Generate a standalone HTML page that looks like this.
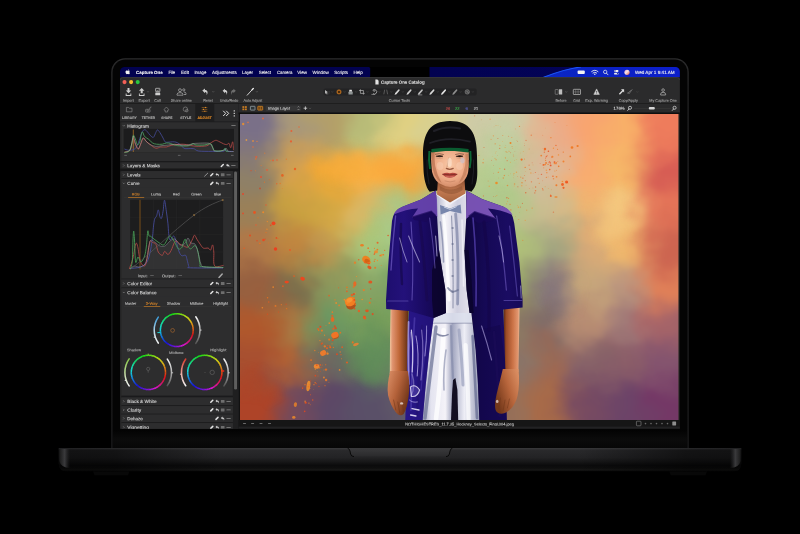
<!DOCTYPE html>
<html lang="en">
<head>
<meta charset="utf-8">
<title>Capture One on MacBook Pro</title>
<style>
html,body{margin:0;padding:0;background:#000;}
body{width:800px;height:534px;overflow:hidden;font-family:"Liberation Sans",sans-serif;}
.stage{position:relative;width:800px;height:534px;background:#000;overflow:hidden;will-change:transform;}
.stage svg{display:block;position:absolute;left:0;top:0;}
</style>
</head>
<body>
<div class="stage">
<svg width="800" height="534" viewBox="0 0 800 534" font-family="'Liberation Sans', sans-serif" text-rendering="geometricPrecision">
<defs>

<linearGradient id="lidEdge" x1="0" y1="0" x2="0" y2="1">
  <stop offset="0" stop-color="#2c2c2d"/><stop offset="0.08" stop-color="#202021"/><stop offset="1" stop-color="#1a1a1b"/>
</linearGradient>
<linearGradient id="chinGrad" x1="0" y1="0" x2="0" y2="1">
  <stop offset="0" stop-color="#030303"/><stop offset="0.5" stop-color="#0b0b0b"/><stop offset="1" stop-color="#070707"/>
</linearGradient>
<linearGradient id="baseGrad" x1="0" y1="0" x2="0" y2="1">
  <stop offset="0" stop-color="#2e2e30"/><stop offset="0.1" stop-color="#29292b"/><stop offset="0.4" stop-color="#232325"/>
  <stop offset="0.6" stop-color="#161617"/><stop offset="0.74" stop-color="#0b0b0c"/><stop offset="0.86" stop-color="#0e0e0e"/>
  <stop offset="0.94" stop-color="#181817"/><stop offset="1" stop-color="#040404"/>
</linearGradient>
<linearGradient id="baseEnds" x1="0" y1="0" x2="1" y2="0">
  <stop offset="0" stop-color="#000" stop-opacity="0.55"/><stop offset="0.08" stop-color="#000" stop-opacity="0.52"/><stop offset="0.24" stop-color="#000" stop-opacity="0"/>
  <stop offset="0.76" stop-color="#000" stop-opacity="0"/><stop offset="0.92" stop-color="#000" stop-opacity="0.52"/><stop offset="1" stop-color="#000" stop-opacity="0.55"/>
</linearGradient>
<linearGradient id="baseTopLine" x1="0" y1="0" x2="1" y2="0">
  <stop offset="0" stop-color="#232325"/><stop offset="0.25" stop-color="#3c3c3e"/><stop offset="0.75" stop-color="#3c3c3e"/><stop offset="1" stop-color="#232325"/>
</linearGradient>
<linearGradient id="sideL" x1="0" y1="0" x2="1" y2="0">
  <stop offset="0" stop-color="#1a1a1a"/><stop offset="0.5" stop-color="#3a3a3c"/><stop offset="1" stop-color="#262628" stop-opacity="0"/>
</linearGradient>
<linearGradient id="sideR" x1="1" y1="0" x2="0" y2="0">
  <stop offset="0" stop-color="#1a1a1a"/><stop offset="0.5" stop-color="#3a3a3c"/><stop offset="1" stop-color="#262628" stop-opacity="0"/>
</linearGradient>
<linearGradient id="notchGrad" x1="0" y1="0" x2="0" y2="1">
  <stop offset="0" stop-color="#3a3a3c"/><stop offset="1" stop-color="#2a2a2c"/>
</linearGradient>

<linearGradient id="mbRight" x1="0" y1="0" x2="1" y2="0">
  <stop offset="0" stop-color="#020250"/><stop offset="1" stop-color="#03035c"/>
</linearGradient>
<linearGradient id="mbSwoosh" x1="0" y1="0" x2="1" y2="0">
  <stop offset="0" stop-color="#0a27c4"/><stop offset="0.35" stop-color="#0b22c2"/><stop offset="1" stop-color="#0c1ecc"/>
</linearGradient>
<linearGradient id="siri" x1="0" y1="0" x2="1" y2="1">
  <stop offset="0" stop-color="#f0a0c0"/><stop offset="0.45" stop-color="#f4e4ec"/><stop offset="1" stop-color="#e0503c"/>
</linearGradient>

<linearGradient id="arcBlue" x1="0" y1="0" x2="0" y2="1"><stop offset="0" stop-color="#3a9ad8"/><stop offset="0.55" stop-color="#b8d8e8"/><stop offset="1" stop-color="#f2f2f2"/></linearGradient>
<linearGradient id="arcGreen" x1="0" y1="0" x2="0" y2="1"><stop offset="0" stop-color="#88c848"/><stop offset="0.55" stop-color="#c0d8a0"/><stop offset="1" stop-color="#f2f2f2"/></linearGradient>
<linearGradient id="arcRed" x1="0" y1="0" x2="0" y2="1"><stop offset="0" stop-color="#d83c2c"/><stop offset="0.55" stop-color="#e8a8a0"/><stop offset="1" stop-color="#f2f2f2"/></linearGradient>
<linearGradient id="arcGrey" x1="0" y1="0" x2="0" y2="1"><stop offset="0" stop-color="#f4f4f4"/><stop offset="0.5" stop-color="#b0b0b0"/><stop offset="1" stop-color="#555"/></linearGradient>

<clipPath id="photoClip"><rect x="240.0" y="114.0" width="438.4" height="306.0"/></clipPath>
<filter id="bgBlur" x="-10%" y="-10%" width="120%" height="120%" color-interpolation-filters="sRGB"><feGaussianBlur stdDeviation="10" result="b"/><feTurbulence type="fractalNoise" baseFrequency="0.022 0.026" numOctaves="3" seed="11" result="t"/><feDisplacementMap in="b" in2="t" scale="34" xChannelSelector="R" yChannelSelector="G" result="d"/><feGaussianBlur in="d" stdDeviation="1.2"/></filter>
<filter id="blobBlur" x="-20%" y="-20%" width="140%" height="140%" color-interpolation-filters="sRGB"><feGaussianBlur stdDeviation="7" result="b"/><feTurbulence type="fractalNoise" baseFrequency="0.03 0.034" numOctaves="3" seed="5" result="t"/><feDisplacementMap in="b" in2="t" scale="26" xChannelSelector="G" yChannelSelector="R" result="d"/><feGaussianBlur in="d" stdDeviation="1"/></filter>
<filter id="soft" x="-5%" y="-5%" width="110%" height="110%" color-interpolation-filters="sRGB"><feGaussianBlur stdDeviation="0.45"/></filter>
<linearGradient id="armL" x1="0" y1="0" x2="1" y2="0"><stop offset="0" stop-color="#f0c8a0"/><stop offset="0.14" stop-color="#e09470"/><stop offset="0.5" stop-color="#c06838"/><stop offset="0.85" stop-color="#7c3e1c"/><stop offset="1" stop-color="#5a2a12"/></linearGradient>
<linearGradient id="armR" x1="0" y1="0" x2="1" y2="0"><stop offset="0" stop-color="#4e220e"/><stop offset="0.2" stop-color="#9c4c26"/><stop offset="0.6" stop-color="#cc7448"/><stop offset="0.88" stop-color="#e0946c"/><stop offset="1" stop-color="#ecb894"/></linearGradient>
<linearGradient id="handL" x1="0" y1="0" x2="1" y2="0.6"><stop offset="0" stop-color="#dc9068"/><stop offset="0.5" stop-color="#b4623a"/><stop offset="1" stop-color="#6e3418"/></linearGradient>
<linearGradient id="handR" x1="1" y1="0" x2="0" y2="0.6"><stop offset="0" stop-color="#e09468"/><stop offset="0.5" stop-color="#b8663c"/><stop offset="1" stop-color="#74381a"/></linearGradient>
<linearGradient id="trouser" x1="0" y1="0" x2="1" y2="0"><stop offset="0" stop-color="#8c90ac"/><stop offset="0.18" stop-color="#e4e4f0"/><stop offset="0.42" stop-color="#f4f2f8"/><stop offset="0.54" stop-color="#a0a4be"/><stop offset="0.74" stop-color="#eeeef6"/><stop offset="1" stop-color="#9a9eb8"/></linearGradient>
<linearGradient id="shirt" x1="0" y1="0" x2="1" y2="0"><stop offset="0" stop-color="#b4b6cc"/><stop offset="0.3" stop-color="#f2f0f6"/><stop offset="0.62" stop-color="#d0d0e0"/><stop offset="1" stop-color="#e4e2ec"/></linearGradient>
<linearGradient id="neck" x1="0" y1="0" x2="0" y2="1"><stop offset="0" stop-color="#8c4c2c"/><stop offset="0.55" stop-color="#c07850"/><stop offset="1" stop-color="#a4623c"/></linearGradient>
<radialGradient id="face" cx="0.5" cy="0.42" r="0.7"><stop offset="0" stop-color="#f8c8a6"/><stop offset="0.55" stop-color="#eeaa86"/><stop offset="1" stop-color="#c47c58"/></radialGradient>
<linearGradient id="jacketL" x1="0" y1="0" x2="1" y2="0"><stop offset="0" stop-color="#1e0e6e"/><stop offset="0.3" stop-color="#23117a"/><stop offset="0.65" stop-color="#190a60"/><stop offset="1" stop-color="#100642"/></linearGradient>
<linearGradient id="jacketR" x1="0" y1="0" x2="1" y2="0"><stop offset="0" stop-color="#0f063e"/><stop offset="0.35" stop-color="#150955"/><stop offset="0.75" stop-color="#1a0c62"/><stop offset="1" stop-color="#170a58"/></linearGradient>
<clipPath id="screenClip"><path d="M120 428.8 V71.6 A4.6 4.6 0 0 1 124.6 67 H675.2 A4.6 4.6 0 0 1 679.8 71.6 V428.8 Z"/></clipPath>
</defs>
<rect id="bg" x="0" y="0" width="800" height="534" fill="#000"/>
<g id="laptop-lid">
<path d="M111.2 449 V72.2 A14 14 0 0 1 125.2 58.2 H674.8 A14 14 0 0 1 688.8 72.2 V449 Z" fill="url(#lidEdge)"/>
<path d="M112.6 449 V72.4 A12.8 12.8 0 0 1 125.4 59.6 H674.6 A12.8 12.8 0 0 1 687.4 72.4 V449 Z" fill="#040404"/>
<rect x="113" y="430" width="574" height="18" fill="url(#chinGrad)"/>
</g>
<g id="screen" clip-path="url(#screenClip)">
<rect x="120" y="67" width="560" height="362" fill="#000"/>
<g id="menubar">
<rect x="120" y="67" width="560" height="10.4" fill="#000"/>
<path d="M120 77.4 V67 H368.6 Q370.2 67 370.2 68.6 V75.8 Q370.2 77.4 368.6 77.4 Z" fill="#020250"/>
<rect x="429.5" y="67" width="250.5" height="10.4" fill="url(#mbRight)"/>
<path d="M543.4 77.4 C556 72.6 566 68.6 581 67 H680 V77.4 Z" fill="url(#mbSwoosh)"/>
<path d="M543.4 77.4 C556 72.6 566 68.6 581 67" fill="none" stroke="#1d55f5" stroke-width="1.1"/>
<g fill="#f2f2f2" transform="translate(128.1 71.8) scale(0.74) translate(-128.3 -72)"><path d="M128.3 70.5 c0.9 -0.5 1.9 -0.2 2.4 0.5 c-0.9 0.6 -1.1 1.8 0 2.5 c-0.3 0.9 -0.9 1.7 -1.6 1.7 c-0.5 0 -0.7 -0.3 -1.2 -0.3 c-0.5 0 -0.7 0.3 -1.2 0.3 c-0.9 0 -1.9 -1.6 -1.9 -3 c0 -1.5 1.2 -2.3 2.3 -1.9 c0.5 0.2 0.8 0.3 1.2 0.2 z"/><path d="M128.3 70.2 c0 -0.8 0.5 -1.4 1.3 -1.6 c0.1 0.8 -0.5 1.5 -1.3 1.6 z"/></g>
<text transform="matrix(1 0.0006 0.0006 1 136.1 73.91)" font-size="4.45" fill="#f4f4f4" textLength="26.6" lengthAdjust="spacingAndGlyphs" font-weight="700" stroke="#f4f4f4" stroke-width="0.1">Capture One</text>
<text transform="matrix(1 0.0006 0.0006 1 168.4 73.93)" font-size="4.5" fill="#eeeeee" textLength="6.8" lengthAdjust="spacingAndGlyphs" stroke="#eeeeee" stroke-width="0.1">File</text>
<text transform="matrix(1 0.0006 0.0006 1 181 73.93)" font-size="4.5" fill="#eeeeee" textLength="8" lengthAdjust="spacingAndGlyphs" stroke="#eeeeee" stroke-width="0.1">Edit</text>
<text transform="matrix(1 0.0006 0.0006 1 194.4 73.93)" font-size="4.5" fill="#eeeeee" textLength="11.9" lengthAdjust="spacingAndGlyphs" stroke="#eeeeee" stroke-width="0.1">Image</text>
<text transform="matrix(1 0.0006 0.0006 1 212 73.93)" font-size="4.5" fill="#eeeeee" textLength="24.8" lengthAdjust="spacingAndGlyphs" stroke="#eeeeee" stroke-width="0.1">Adjustments</text>
<text transform="matrix(1 0.0006 0.0006 1 241.9 73.93)" font-size="4.5" fill="#eeeeee" textLength="11.2" lengthAdjust="spacingAndGlyphs" stroke="#eeeeee" stroke-width="0.1">Layer</text>
<text transform="matrix(1 0.0006 0.0006 1 258.7 73.93)" font-size="4.5" fill="#eeeeee" textLength="12.2" lengthAdjust="spacingAndGlyphs" stroke="#eeeeee" stroke-width="0.1">Select</text>
<text transform="matrix(1 0.0006 0.0006 1 276.9 73.93)" font-size="4.5" fill="#eeeeee" textLength="15.5" lengthAdjust="spacingAndGlyphs" stroke="#eeeeee" stroke-width="0.1">Camera</text>
<text transform="matrix(1 0.0006 0.0006 1 297.3 73.93)" font-size="4.5" fill="#eeeeee" textLength="9.7" lengthAdjust="spacingAndGlyphs" stroke="#eeeeee" stroke-width="0.1">View</text>
<text transform="matrix(1 0.0006 0.0006 1 312.6 73.93)" font-size="4.5" fill="#eeeeee" textLength="16.3" lengthAdjust="spacingAndGlyphs" stroke="#eeeeee" stroke-width="0.1">Window</text>
<text transform="matrix(1 0.0006 0.0006 1 334.3 73.93)" font-size="4.5" fill="#eeeeee" textLength="13.8" lengthAdjust="spacingAndGlyphs" stroke="#eeeeee" stroke-width="0.1">Scripts</text>
<text transform="matrix(1 0.0006 0.0006 1 353.5 73.93)" font-size="4.5" fill="#eeeeee" textLength="9.4" lengthAdjust="spacingAndGlyphs" stroke="#eeeeee" stroke-width="0.1">Help</text>
<rect x="577.6" y="70.6" width="7.2" height="3.4" rx="0.9" fill="#f4f4f4"/>
<g fill="none" stroke="#f0f0f0" stroke-linecap="round"><path d="M591.6 71.6 Q594.8 68.8 598 71.6" stroke-width="0.9"/><path d="M592.9 73 Q594.8 71.3 596.7 73" stroke-width="0.9"/></g><circle cx="594.8" cy="74.3" r="0.75" fill="#f0f0f0"/>
<circle cx="605.2" cy="71.9" r="1.7" fill="none" stroke="#f0f0f0" stroke-width="0.75"/><path d="M606.5 73.2 L608 74.8" stroke="#f0f0f0" stroke-width="0.8" stroke-linecap="round"/>
<g fill="#f0f0f0"><rect x="614.1" y="70" width="4.4" height="1.9" rx="0.9"/><rect x="614.1" y="72.7" width="4.4" height="1.9" rx="0.9"/></g><circle cx="615.1" cy="70.95" r="0.6" fill="#10208c"/><circle cx="617.5" cy="73.65" r="0.6" fill="#10208c"/>
<circle cx="627" cy="72.3" r="2.6" fill="url(#siri)"/>
<text transform="matrix(1 0.0006 0.0006 1 634.9 73.93)" font-size="4.5" fill="#f2f2f2" textLength="39.8" lengthAdjust="spacingAndGlyphs" stroke="#f2f2f2" stroke-width="0.1">Wed Apr 1  9:41 AM</text>
</g>
<g id="app-window">
<rect x="120" y="77.3" width="560" height="352" fill="#1e1e1f"/>
<g id="toolbar">
<path d="M120 104 V80 Q120 77.3 122.7 77.3 H677.3 Q680 77.3 680 80 V104 Z" fill="#2b2b2c"/>
<path d="M120.2 80 Q120.2 77.6 122.7 77.6 H677.3 Q679.8 77.6 679.8 80" fill="none" stroke="#4a4a4c" stroke-width="0.5"/>
<circle cx="124.5" cy="82.1" r="2.05" fill="#f35f57"/>
<circle cx="131.1" cy="82.1" r="2.05" fill="#f6bd2e"/>
<circle cx="137.7" cy="82.1" r="2.05" fill="#2ac63f"/>
<path d="M375.4 79.6 h2 l1.2 1.2 v3.6 h-3.2 z" fill="#e4e4e4"/>
<text transform="matrix(1 0.0006 0.0006 1 381 83.66)" font-size="4.6" fill="#dcdcdc" textLength="43.6" lengthAdjust="spacingAndGlyphs" font-weight="700" stroke="#dcdcdc" stroke-width="0.1">Capture One Catalog</text>
<g fill="#cdcdcd">
<path d="M127.5 87.9 h2 v2.5 h1.7 l-2.7 2.9 l-2.7 -2.9 h1.7 z"/>
<path d="M125.7 93.4 h0.9 v1.6 h3.8 v-1.6 h0.9 v2.6 h-5.6 z"/>
<path d="M140.7 93.3 h2 v-2.5 h1.7 l-2.7 -2.9 l-2.7 2.9 h1.7 z"/>
<path d="M138.9 93.4 h0.9 v1.6 h3.8 v-1.6 h0.9 v2.6 h-5.6 z"/>
</g>
<path d="M147.25 91.4 l0.75 0.8 l0.75 -0.8" fill="none" stroke="#8a8a8a" stroke-width="0.45"/>
<rect x="155.6" y="88.3" width="4.3" height="3.3" rx="0.4" fill="none" stroke="#d0d0d0" stroke-width="0.7"/><rect x="155.3" y="92.6" width="4.9" height="2.6" rx="0.3" fill="#cfcfcf"/><path d="M156.8 90.2 l0.8 0.8 l1.3 -1.5" stroke="#d0d0d0" stroke-width="0.5" fill="none"/>
<g fill="none" stroke="#bdbdbd" stroke-width="0.65"><circle cx="180" cy="90.2" r="1.45"/><path d="M177 95.2 V94.4 Q177 92.6 180 92.6 Q183 92.6 183 94.4 V95.2 Z"/><circle cx="183.8" cy="89.9" r="1.1"/><path d="M183.9 92 Q186 92 186 93.6 V94.5 H184"/></g>
<path d="M202.3 90.6 L205 88.4 V89.9 C207.8 89.9 208.3 92.6 206.6 95.2 C207 93.1 206.4 92 205 92 V93.3 Z" fill="#cdcdcd"/>
<path d="M212.55 91.4 l0.75 0.8 l0.75 -0.8" fill="none" stroke="#8a8a8a" stroke-width="0.45"/>
<path d="M222.6 90.8 L225 88.8 V90.1 C227.4 90.1 227.9 92.6 226.5 95 C226.8 93.1 226.2 92.1 225 92.1 V93.2 Z" fill="#cdcdcd"/>
<path d="M235.8 90.8 L233.4 88.8 V90.1 C231 90.1 230.5 92.6 231.9 95 C231.6 93.1 232.2 92.1 233.4 92.1 V93.2 Z" fill="#6d6d6d"/>
<path d="M247.2 95.2 L253.2 88.6" stroke="#cfcfcf" stroke-width="1" stroke-linecap="round"/><path d="M252 89.9 L253.3 88.5" stroke="#f2f2f2" stroke-width="1.2" stroke-linecap="round"/>
<path d="M256.15 91.4 l0.75 0.8 l0.75 -0.8" fill="none" stroke="#8a8a8a" stroke-width="0.45"/>
<text transform="matrix(1 0.0006 0.0006 1 122.9 101.79)" font-size="3.8" fill="#a2a2a2" textLength="10.9" lengthAdjust="spacingAndGlyphs" stroke="#a2a2a2" stroke-width="0.1">Import</text>
<text transform="matrix(1 0.0006 0.0006 1 138.6 101.79)" font-size="3.8" fill="#a2a2a2" textLength="11.3" lengthAdjust="spacingAndGlyphs" stroke="#a2a2a2" stroke-width="0.1">Export</text>
<text transform="matrix(1 0.0006 0.0006 1 154.3 101.79)" font-size="3.8" fill="#a2a2a2" textLength="6.6" lengthAdjust="spacingAndGlyphs" stroke="#a2a2a2" stroke-width="0.1">Cull</text>
<text transform="matrix(1 0.0006 0.0006 1 170.8 101.79)" font-size="3.8" fill="#a2a2a2" textLength="21.1" lengthAdjust="spacingAndGlyphs" stroke="#a2a2a2" stroke-width="0.1">Share online</text>
<text transform="matrix(1 0.0006 0.0006 1 203.2 101.79)" font-size="3.8" fill="#a2a2a2" textLength="9.7" lengthAdjust="spacingAndGlyphs" stroke="#a2a2a2" stroke-width="0.1">Reset</text>
<text transform="matrix(1 0.0006 0.0006 1 219.8 101.79)" font-size="3.8" fill="#a2a2a2" textLength="18.6" lengthAdjust="spacingAndGlyphs" stroke="#a2a2a2" stroke-width="0.1">Undo/Redo</text>
<text transform="matrix(1 0.0006 0.0006 1 243.4 101.79)" font-size="3.8" fill="#a2a2a2" textLength="18.8" lengthAdjust="spacingAndGlyphs" stroke="#a2a2a2" stroke-width="0.1">Auto Adjust</text>
<text transform="matrix(1 0.0006 0.0006 1 388.8 101.79)" font-size="3.8" fill="#a2a2a2" textLength="21.2" lengthAdjust="spacingAndGlyphs" stroke="#a2a2a2" stroke-width="0.1">Cursor Tools</text>
<text transform="matrix(1 0.0006 0.0006 1 555.6 101.79)" font-size="3.8" fill="#a2a2a2" textLength="10.9" lengthAdjust="spacingAndGlyphs" stroke="#a2a2a2" stroke-width="0.1">Before</text>
<text transform="matrix(1 0.0006 0.0006 1 573.2 101.79)" font-size="3.8" fill="#a2a2a2" textLength="6.6" lengthAdjust="spacingAndGlyphs" stroke="#a2a2a2" stroke-width="0.1">Grid</text>
<text transform="matrix(1 0.0006 0.0006 1 585.3 101.79)" font-size="3.8" fill="#a2a2a2" textLength="22.6" lengthAdjust="spacingAndGlyphs" stroke="#a2a2a2" stroke-width="0.1">Exp. Warning</text>
<text transform="matrix(1 0.0006 0.0006 1 618.8 101.79)" font-size="3.8" fill="#a2a2a2" textLength="19.2" lengthAdjust="spacingAndGlyphs" stroke="#a2a2a2" stroke-width="0.1">Copy/Apply</text>
<text transform="matrix(1 0.0006 0.0006 1 649.3 101.79)" font-size="3.8" fill="#a2a2a2" textLength="27.6" lengthAdjust="spacingAndGlyphs" stroke="#a2a2a2" stroke-width="0.1">My Capture One</text>
<rect x="323.6" y="88.4" width="153" height="7" rx="1.6" fill="#232324"/>
<path d="M325 89.9 l3.1 2.3 l-1.4 0.3 l0.9 1.5 l-0.7 0.4 l-0.9 -1.5 l-1 1 z" fill="#b6b6b6"/>
<path d="M326.5 93.9 h2.6 M329.1 91.4 v2.4" stroke="#8a8a8a" stroke-width="0.4" stroke-dasharray="0.6 0.5" fill="none"/>
<path d="M331.65 91.55 l0.65 0.7 l0.65 -0.7" fill="none" stroke="#6e6e6e" stroke-width="0.4"/>
<circle cx="339" cy="91.9" r="2.2" fill="#a05c18"/><circle cx="339" cy="91.9" r="2.2" fill="none" stroke="#c47824" stroke-width="0.55"/><circle cx="339" cy="92" r="0.9" fill="#1e1206"/>
<path d="M343.95 91.55 l0.65 0.7 l0.65 -0.7" fill="none" stroke="#6e6e6e" stroke-width="0.4"/>
<path d="M348.5 94.5 v-2.2 q0 -0.7 0.7 -0.7 h2.8 q0.7 0 0.7 0.7 v2.2 z" fill="#8f9494"/><path d="M349 91.4 l0.5 -1.7 h2.2 l0.5 1.7 z" fill="#e4e4e4"/>
<path d="M355.55 91.55 l0.65 0.7 l0.65 -0.7" fill="none" stroke="#6e6e6e" stroke-width="0.4"/>
<path d="M360.4 89.3 v4.1 h4.3 M363.4 94.6 v-4.1 h-4.3" fill="none" stroke="#b6b6b6" stroke-width="0.7"/>
<path d="M366.85 91.55 l0.65 0.7 l0.65 -0.7" fill="none" stroke="#6e6e6e" stroke-width="0.4"/>
<path d="M373 93.7 a2.3 2.3 0 1 0 -0.3 -3.4" fill="none" stroke="#b6b6b6" stroke-width="0.8"/><path d="M371.4 94.4 h3.4" stroke="#b6b6b6" stroke-width="0.6"/><path d="M373.4 90.2 l0.6 1.6 M374.4 90 l0.2 1.8" stroke="#b6b6b6" stroke-width="0.5"/>
<path d="M378.75 91.55 l0.65 0.7 l0.65 -0.7" fill="none" stroke="#6e6e6e" stroke-width="0.4"/>
<path d="M383.8 94.3 l0.9 -4.6 M387.6 94.3 l-0.9 -4.6" fill="none" stroke="#7c7c7c" stroke-width="0.6"/>
<path d="M390.65 91.55 l0.65 0.7 l0.65 -0.7" fill="none" stroke="#6e6e6e" stroke-width="0.4"/>
<path d="M395.8 93.6 L398.8 90.2" stroke="#d6d6d6" stroke-width="1.7" stroke-linecap="round"/>
<path d="M395 94.6 l0.7 -0.9" stroke="#d6d6d6" stroke-width="0.6" stroke-linecap="round"/>
<path d="M402.25 91.55 l0.65 0.7 l0.65 -0.7" fill="none" stroke="#6e6e6e" stroke-width="0.4"/>
<path d="M407.7 93.6 L410.7 90.2" stroke="#cdcdcd" stroke-width="1.7" stroke-linecap="round"/>
<path d="M406.9 94.6 l0.7 -0.9" stroke="#cdcdcd" stroke-width="0.6" stroke-linecap="round"/>
<path d="M414.15 91.55 l0.65 0.7 l0.65 -0.7" fill="none" stroke="#6e6e6e" stroke-width="0.4"/>
<path d="M419 93.6 L422 90.2" stroke="#bdbdbd" stroke-width="1.7" stroke-linecap="round"/>
<path d="M418.2 94.6 l0.7 -0.9" stroke="#bdbdbd" stroke-width="0.6" stroke-linecap="round"/>
<path d="M418.1 94.9 h4.2" stroke="#bdbdbd" stroke-width="0.6"/>
<path d="M425.45 91.55 l0.65 0.7 l0.65 -0.7" fill="none" stroke="#6e6e6e" stroke-width="0.4"/>
<path d="M430.6 93.6 L433.6 90.2" stroke="#d6d6d6" stroke-width="1.7" stroke-linecap="round"/>
<path d="M429.8 94.6 l0.7 -0.9" stroke="#d6d6d6" stroke-width="0.6" stroke-linecap="round"/>
<path d="M437.05 91.55 l0.65 0.7 l0.65 -0.7" fill="none" stroke="#6e6e6e" stroke-width="0.4"/>
<path d="M442.2 93.6 L445.2 90.2" stroke="#e2e2e2" stroke-width="1.7" stroke-linecap="round"/>
<path d="M441.4 94.6 l0.7 -0.9" stroke="#e2e2e2" stroke-width="0.6" stroke-linecap="round"/>
<path d="M448.65 91.55 l0.65 0.7 l0.65 -0.7" fill="none" stroke="#6e6e6e" stroke-width="0.4"/>
<path d="M453.5 93.6 L456.5 90.2" stroke="#8e8e8e" stroke-width="1.7" stroke-linecap="round"/>
<path d="M452.7 94.6 l0.7 -0.9" stroke="#8e8e8e" stroke-width="0.6" stroke-linecap="round"/>
<path d="M459.95 91.55 l0.65 0.7 l0.65 -0.7" fill="none" stroke="#6e6e6e" stroke-width="0.4"/>
<circle cx="467.3" cy="91.9" r="2.2" fill="#4a4a4a" stroke="#8a8a8a" stroke-width="0.6"/><path d="M466.2 90.9 l2.2 2.2 M467.2 91.2 l1.4 1.6" stroke="#8a8a8a" stroke-width="0.5"/>
<path d="M472.25 91.55 l0.65 0.7 l0.65 -0.7" fill="none" stroke="#6e6e6e" stroke-width="0.4"/>
<rect x="555.2" y="89.5" width="3" height="4.8" rx="0.3" fill="none" stroke="#8f8f8f" stroke-width="0.6"/><rect x="559" y="89.3" width="3.2" height="5.2" rx="0.3" fill="#bdbdbd"/>
<path d="M565.55 91.5 l0.75 0.8 l0.75 -0.8" fill="none" stroke="#8a8a8a" stroke-width="0.45"/>
<rect x="573.3" y="89.3" width="7.2" height="5.2" rx="0.5" fill="none" stroke="#c2c2c2" stroke-width="0.7"/><path d="M575.7 89.5 v4.8 M578.1 89.5 v4.8 M573.5 91.9 h6.8" stroke="#a5a5a5" stroke-width="0.4"/>
<path d="M596.6 88.9 L599.4 94.4 H593.8 Z" fill="#d2d2d2" stroke="#d2d2d2" stroke-width="0.5" stroke-linejoin="round"/><path d="M596.6 90.9 v1.8 M596.6 93.3 v0.5" stroke="#2b2b2c" stroke-width="0.7"/>
<path d="M619.4 94.3 L623.2 90.2" stroke="#dedede" stroke-width="1.3"/><path d="M621 89.2 H624.1 V92.4 Z" fill="#dedede"/>
<path d="M627.6 93.6 L631 90.2 M627.8 92.2 L629 93.8 L632.3 89.3" fill="none" stroke="#6f6f6f" stroke-width="0.9"/>
<path d="M636.65 91.5 l0.75 0.8 l0.75 -0.8" fill="none" stroke="#5c5c5c" stroke-width="0.45"/>
<g fill="none" stroke="#bcbcbc" stroke-width="0.7"><circle cx="663.1" cy="90.1" r="1.3"/><path d="M660.6 95 V94.2 Q660.6 92.3 663.1 92.3 Q665.6 92.3 665.6 94.2 V95 Z"/></g>
</g>
<g id="tool-panel">
<rect x="120" y="103.9" width="118.6" height="325" fill="#242425"/>
<rect x="238.6" y="103.9" width="1.5" height="325" fill="#111"/>
<g id="tool-tabs">
<rect x="120" y="103.9" width="118.6" height="17.7" fill="#2a2a2b"/>
<rect x="195.3" y="103.9" width="19" height="17.7" fill="#1e1e1f"/>
<path d="M126.4 107.4 h2 l0.8 0.8 h2.8 v3.6 h-5.6 z" fill="none" stroke="#8e8e8e" stroke-width="0.6" stroke-linejoin="round"/>
<g fill="none" stroke="#8e8e8e" stroke-width="0.6"><rect x="145.6" y="109.3" width="4.4" height="2.8" rx="0.5"/><circle cx="147.8" cy="110.7" r="0.8"/><path d="M149.6 109.2 q0 -2.4 1.8 -2.2"/></g>
<path d="M164.2 109.4 L166.4 107 L168.6 109.4 V110.2 H167.6 V112 H165.2 V110.2 H164.2 Z" fill="none" stroke="#8e8e8e" stroke-width="0.6" stroke-linejoin="round"/>
<g fill="none" stroke="#8e8e8e" stroke-width="0.6"><circle cx="185.4" cy="109.2" r="2.2"/><circle cx="186.8" cy="110.6" r="1.3"/></g>
<g stroke="#c47a22" stroke-width="0.5"><path d="M201.7 107.5 h5.6 M201.7 109.4 h5.6 M201.7 111.3 h5.6"/></g>
<g fill="#e8912d"><rect x="205" y="106.9" width="0.9" height="1.2"/><rect x="203" y="108.8" width="0.9" height="1.2"/><rect x="204.4" y="110.7" width="0.9" height="1.2"/></g>
<text transform="matrix(1 0.0006 0.0006 1 122 118.89)" font-size="3.5" fill="#a8a8a8" textLength="14.7" lengthAdjust="spacingAndGlyphs" font-weight="700" stroke="#a8a8a8" stroke-width="0.1">LIBRARY</text>
<text transform="matrix(1 0.0006 0.0006 1 141.7 118.89)" font-size="3.5" fill="#a8a8a8" textLength="13.4" lengthAdjust="spacingAndGlyphs" font-weight="700" stroke="#a8a8a8" stroke-width="0.1">TETHER</text>
<text transform="matrix(1 0.0006 0.0006 1 161.2 118.89)" font-size="3.5" fill="#a8a8a8" textLength="11.3" lengthAdjust="spacingAndGlyphs" font-weight="700" stroke="#a8a8a8" stroke-width="0.1">SHAPE</text>
<text transform="matrix(1 0.0006 0.0006 1 180.2 118.89)" font-size="3.5" fill="#a8a8a8" textLength="11.1" lengthAdjust="spacingAndGlyphs" font-weight="700" stroke="#a8a8a8" stroke-width="0.1">STYLE</text>
<text transform="matrix(1 0.0006 0.0006 1 197.5 118.89)" font-size="3.5" fill="#e08a26" textLength="14.2" lengthAdjust="spacingAndGlyphs" font-weight="700" stroke="#e08a26" stroke-width="0.1">ADJUST</text>
<path d="M223.2 110.8 l2.5 2.6 l-2.5 2.6 M226.2 110.8 l2.5 2.6 l-2.5 2.6" fill="none" stroke="#ececec" stroke-width="0.95"/>
<rect x="233.6" y="110.15" width="1.4" height="1.3" rx="0.3" fill="#c4c4c4"/>
<rect x="233.6" y="112.65" width="1.4" height="1.3" rx="0.3" fill="#c4c4c4"/>
<rect x="233.6" y="115.15" width="1.4" height="1.3" rx="0.3" fill="#c4c4c4"/>
</g>
<rect x="120" y="121.6" width="118.6" height="0.7" fill="#1b1b1c"/>
<g id="histogram">
<rect x="121.4" y="122.3" width="116.6" height="38.8" fill="#2d2d2e"/>
<path d="M122.8 125.2 l1 1 l1 -1" fill="none" stroke="#9c9c9c" stroke-width="0.5"/>
<text transform="matrix(1 0.0006 0.0006 1 127.3 127.68)" font-size="4.65" fill="#dadada" textLength="21.7" lengthAdjust="spacingAndGlyphs" stroke="#dadada" stroke-width="0.1">Histogram</text>
<rect x="231.3" y="125.3" width="4.4" height="0.75" rx="0.3" fill="#8c8c8c"/>
<rect x="123.6" y="128.9" width="110.4" height="23.4" fill="#1c1c1d"/>
<path d="M124.4 152 C125.22 151.75 128.08 151.83 129.3 150.5 C130.52 149.17 131.03 146.42 131.7 144 C132.37 141.58 132.75 136.33 133.3 136 C133.85 135.67 134.2 139.9 135 142 C135.8 144.1 137.18 148.27 138.1 148.6 C139.02 148.93 139.7 145.8 140.5 144 C141.3 142.2 141.98 138.3 142.9 137.8 C143.82 137.3 144.82 139.9 146 141 C147.18 142.1 148.37 143.5 150 144.4 C151.63 145.3 153.8 146.2 155.8 146.4 C157.8 146.6 159.97 145.83 162 145.6 C164.03 145.37 165.93 145.23 168 145 C170.07 144.77 172.07 144.2 174.4 144.2 C176.73 144.2 179.73 144.87 182 145 C184.27 145.13 186.17 145.23 188 145 C189.83 144.77 191.25 143.9 193 143.6 C194.75 143.3 196.23 143.3 198.5 143.2 C200.77 143.1 204.58 142.87 206.6 143 C208.62 143.13 209.53 143.07 210.6 144 C211.67 144.93 212.33 147.43 213 148.6 C213.67 149.77 212.85 150.7 214.6 151 C216.35 151.3 221.55 150.83 223.5 150.4 C225.45 149.97 225.5 148.27 226.3 148.4 C227.1 148.53 227.02 150.67 228.3 151.2 C229.58 151.73 233.05 151.53 234 151.6 L234 152.3 L124.4 152.3 Z" fill="#3c3c3c" opacity="0.7"/>
<path d="M133.3 129.5 V152" stroke="#b8792a" stroke-width="0.8" opacity="0.9"/>
<g fill="none" stroke-width="0.8" stroke-linejoin="round">
<path d="M124.4 149 C125.08 149.2 126.88 150.13 128.5 150.2 C130.12 150.27 132.63 150.2 134.1 149.4 C135.57 148.6 136.23 147.55 137.3 145.4 C138.37 143.25 139.68 138.78 140.5 136.5 C141.32 134.22 141.52 132.83 142.2 131.7 C142.88 130.57 143.8 129.77 144.6 129.7 C145.4 129.63 146.07 130.37 147 131.3 C147.93 132.23 149.13 134.3 150.2 135.3 C151.27 136.3 152.47 137.77 153.4 137.3 C154.33 136.83 155.12 133.73 155.8 132.5 C156.48 131.27 156.82 129.9 157.5 129.9 C158.18 129.9 158.97 131.13 159.9 132.5 C160.83 133.87 162.23 136.55 163.1 138.1 C163.97 139.65 164.3 141.12 165.1 141.8 C165.9 142.48 166.62 142.2 167.9 142.2 C169.18 142.2 171.45 141.8 172.8 141.8 C174.15 141.8 174.93 141.87 176 142.2 C177.07 142.53 177.87 142.8 179.2 143.8 C180.53 144.8 182.52 147.4 184 148.2 C185.48 149 186.48 148.53 188.1 148.6 C189.72 148.67 191.97 148.2 193.7 148.6 C195.43 149 195.42 150.53 198.5 151 C201.58 151.47 208.03 151.37 212.2 151.4 C216.37 151.43 221.35 151.67 223.5 151.2 C225.65 150.73 224.63 148.63 225.1 148.6 C225.57 148.57 224.97 150.53 226.3 151 C227.63 151.47 231.97 151.33 233.1 151.4" stroke="#464c9c"/>
<path d="M124.4 152.2 C125.35 151.87 128.82 151.87 130.1 150.2 C131.38 148.53 131.57 144.22 132.1 142.2 C132.63 140.18 132.83 137.97 133.3 138.1 C133.77 138.23 134.1 141.12 134.9 143 C135.7 144.88 137.17 149.13 138.1 149.4 C139.03 149.67 139.62 146.48 140.5 144.6 C141.38 142.72 142.45 138.63 143.4 138.1 C144.35 137.57 145.07 140.32 146.2 141.4 C147.33 142.48 148.6 143.47 150.2 144.6 C151.8 145.73 154.05 147.8 155.8 148.2 C157.55 148.6 158.95 147.2 160.7 147 C162.45 146.8 164.57 147.27 166.3 147 C168.03 146.73 169.48 145.8 171.1 145.4 C172.72 145 174.18 144.8 176 144.6 C177.82 144.4 180.27 144.2 182 144.2 C183.73 144.2 184.05 144.25 186.4 144.6 C188.75 144.95 192.73 146.1 196.1 146.3 C199.47 146.5 204.18 146.35 206.6 145.8 C209.02 145.25 209.13 143.9 210.6 143 C212.07 142.1 214.07 140.68 215.4 140.4 C216.73 140.12 217.25 140.73 218.6 141.3 C219.95 141.87 222.15 143.25 223.5 143.8 C224.85 144.35 225.77 144.67 226.7 144.6 C227.63 144.53 228.43 142.87 229.1 143.4 C229.77 143.93 230.1 148.07 230.7 147.8 C231.3 147.53 232.23 141.4 232.7 141.8 C233.17 142.2 233.37 148.8 233.5 150.2" stroke="#b44a48"/>
<path d="M124.4 152.6 C125.22 152.33 128.08 152.47 129.3 151 C130.52 149.53 131.03 146.42 131.7 143.8 C132.37 141.18 132.7 136.12 133.3 135.3 C133.9 134.48 134.63 137.35 135.3 138.9 C135.97 140.45 136.57 144.05 137.3 144.6 C138.03 145.15 139.03 143.95 139.7 142.2 C140.37 140.45 140.82 135.78 141.3 134.1 C141.78 132.42 142.05 131.7 142.6 132.1 C143.15 132.5 143.6 135.3 144.6 136.5 C145.6 137.7 147.27 138.22 148.6 139.3 C149.93 140.38 151.27 142.18 152.6 143 C153.93 143.82 154.98 144 156.6 144.2 C158.22 144.4 160.68 144.4 162.3 144.2 C163.92 144 164.97 143.13 166.3 143 C167.63 142.87 168.95 143.07 170.3 143.4 C171.65 143.73 172.92 144.6 174.4 145 C175.88 145.4 176.92 145.67 179.2 145.8 C181.48 145.93 185.82 146.13 188.1 145.8 C190.38 145.47 191.57 143.93 192.9 143.8 C194.23 143.67 194.22 144.8 196.1 145 C197.98 145.2 201.78 145.2 204.2 145 C206.62 144.8 209.2 143.47 210.6 143.8 C212 144.13 211.93 145.87 212.6 147 C213.27 148.13 213.32 149.93 214.6 150.6 C215.88 151.27 218.75 151.13 220.3 151 C221.85 150.87 223.1 150.27 223.9 149.8 C224.7 149.33 224.77 148 225.1 148.2 C225.43 148.4 225.37 150.47 225.9 151 C226.43 151.53 227.9 151.33 228.3 151.4" stroke="#52a862"/>
<path d="M124.4 152 C125.22 151.75 128.08 151.83 129.3 150.5 C130.52 149.17 131.03 146.42 131.7 144 C132.37 141.58 132.75 136.33 133.3 136 C133.85 135.67 134.2 139.9 135 142 C135.8 144.1 137.18 148.27 138.1 148.6 C139.02 148.93 139.7 145.8 140.5 144 C141.3 142.2 141.98 138.3 142.9 137.8 C143.82 137.3 144.82 139.9 146 141 C147.18 142.1 148.37 143.5 150 144.4 C151.63 145.3 153.8 146.2 155.8 146.4 C157.8 146.6 159.97 145.83 162 145.6 C164.03 145.37 165.93 145.23 168 145 C170.07 144.77 172.07 144.2 174.4 144.2 C176.73 144.2 179.73 144.87 182 145 C184.27 145.13 186.17 145.23 188 145 C189.83 144.77 191.25 143.9 193 143.6 C194.75 143.3 196.23 143.3 198.5 143.2 C200.77 143.1 204.58 142.87 206.6 143 C208.62 143.13 209.53 143.07 210.6 144 C211.67 144.93 212.33 147.43 213 148.6 C213.67 149.77 212.85 150.7 214.6 151 C216.35 151.3 221.55 150.83 223.5 150.4 C225.45 149.97 225.5 148.27 226.3 148.4 C227.1 148.53 227.02 150.67 228.3 151.2 C229.58 151.73 233.05 151.53 234 151.6" stroke="#c8c8c8" stroke-width="0.5" opacity="0.75"/>
</g>
<rect x="124.3" y="154.9" width="2.6" height="0.7" fill="#777"/>
<rect x="177.9" y="154.9" width="2.6" height="0.7" fill="#777"/>
<rect x="231" y="154.9" width="2.6" height="0.7" fill="#777"/>
</g>
<rect x="120" y="161.1" width="118.6" height="1.3" fill="#1b1b1c"/>
<g id="layers-masks">
<rect x="121.4" y="162.4" width="116.6" height="6.2" fill="#2d2d2e"/><path d="M123.2 164.5 l1 1 l-1 1" fill="none" stroke="#9c9c9c" stroke-width="0.5"/><text transform="matrix(1 0.0006 0.0006 1 127.3 167.23)" font-size="4.65" fill="#dadada" textLength="32.6" lengthAdjust="spacingAndGlyphs" stroke="#dadada" stroke-width="0.1">Layers &amp; Masks</text><path d="M221.3 166.5 L223.3 164.5" stroke="#e4e4e4" stroke-width="1.5" stroke-linecap="round"/><path d="M226 165.1 l1.6 -1.4 v0.9 c1.9 0 2.2 1.5 1.4 3 c0 -1.2 -0.5 -1.7 -1.4 -1.7 v0.8 z" fill="#d2d2d2"/><rect x="231.2" y="165.2" width="4.4" height="0.75" rx="0.3" fill="#8c8c8c"/>
</g>
<rect x="120" y="168.6" width="118.6" height="2.6" fill="#171718"/>
<rect x="121.4" y="171.2" width="111.5" height="257.6" fill="#2d2d2e"/>
<rect x="232.9" y="171.2" width="5.7" height="257.6" fill="#1f1f20"/>
<rect x="234.1" y="171.6" width="2.9" height="218" rx="1.4" fill="#5e5e5e"/>
<g id="levels"><rect x="121.4" y="171.2" width="111.5" height="7" fill="#2d2d2e"/><path d="M123.2 173.7 l1 1 l-1 1" fill="none" stroke="#9c9c9c" stroke-width="0.5"/><text transform="matrix(1 0.0006 0.0006 1 127.3 176.43)" font-size="4.65" fill="#dadada" textLength="13.2" lengthAdjust="spacingAndGlyphs" stroke="#dadada" stroke-width="0.1">Levels</text><path d="M204.6 176.2 L207.7 173.2" stroke="#bdbdbd" stroke-width="0.7" stroke-linecap="round"/><path d="M210.8 175.7 L212.8 173.7" stroke="#e4e4e4" stroke-width="1.5" stroke-linecap="round"/><path d="M215.5 174.3 l1.6 -1.4 v0.9 c1.9 0 2.2 1.5 1.4 3 c0 -1.2 -0.5 -1.7 -1.4 -1.7 v0.8 z" fill="#d2d2d2"/><rect x="220.9" y="173.3" width="3.6" height="2.9" rx="0.3" fill="#6e6e6e"/><rect x="226.4" y="174.4" width="4.4" height="0.75" rx="0.3" fill="#8c8c8c"/></g>
<rect x="121.4" y="178.2" width="111.5" height="0.9" fill="#1b1b1c"/>
<g id="curve">
<rect x="121.4" y="179.1" width="111.5" height="8.5" fill="#2d2d2e"/><path d="M122.8 182.75 l1 1 l1 -1" fill="none" stroke="#9c9c9c" stroke-width="0.5"/><text transform="matrix(1 0.0006 0.0006 1 127.3 185.08)" font-size="4.65" fill="#dadada" textLength="12.4" lengthAdjust="spacingAndGlyphs" stroke="#dadada" stroke-width="0.1">Curve</text><path d="M210.8 184.35 L212.8 182.35" stroke="#e4e4e4" stroke-width="1.5" stroke-linecap="round"/><path d="M215.5 182.95 l1.6 -1.4 v0.9 c1.9 0 2.2 1.5 1.4 3 c0 -1.2 -0.5 -1.7 -1.4 -1.7 v0.8 z" fill="#d2d2d2"/><rect x="220.9" y="181.95" width="3.6" height="2.9" rx="0.3" fill="#6e6e6e"/><rect x="226.4" y="183.05" width="4.4" height="0.75" rx="0.3" fill="#8c8c8c"/>
<text transform="matrix(1 0.0006 0.0006 1 131.8 195.46)" font-size="3.7" fill="#d8862a" textLength="7.8" lengthAdjust="spacingAndGlyphs" stroke="#d8862a" stroke-width="0.1">RGB</text>
<text transform="matrix(1 0.0006 0.0006 1 151 195.46)" font-size="3.7" fill="#c4c4c4" textLength="10.1" lengthAdjust="spacingAndGlyphs" stroke="#c4c4c4" stroke-width="0.1">Luma</text>
<text transform="matrix(1 0.0006 0.0006 1 172.8 195.46)" font-size="3.7" fill="#c4c4c4" textLength="6.8" lengthAdjust="spacingAndGlyphs" stroke="#c4c4c4" stroke-width="0.1">Red</text>
<text transform="matrix(1 0.0006 0.0006 1 191.3 195.46)" font-size="3.7" fill="#c4c4c4" textLength="10.4" lengthAdjust="spacingAndGlyphs" stroke="#c4c4c4" stroke-width="0.1">Green</text>
<text transform="matrix(1 0.0006 0.0006 1 214 195.46)" font-size="3.7" fill="#c4c4c4" textLength="7.1" lengthAdjust="spacingAndGlyphs" stroke="#c4c4c4" stroke-width="0.1">Blue</text>
<rect x="124" y="197.3" width="107" height="0.4" fill="#3a3a3a"/>
<rect x="128.1" y="197.2" width="16.1" height="0.65" fill="#cc7e24"/>
<rect x="130.1" y="199.8" width="93" height="69.7" fill="#1d1d1e"/>
<path d="M153.35 199.8 V269.5 M130.1 217.23 H223.1 M176.6 199.8 V269.5 M130.1 234.65 H223.1 M199.85 199.8 V269.5 M130.1 252.08 H223.1" stroke="#2a2a2a" stroke-width="0.4" fill="none"/>
<path d="M130.1 269 C130.75 268.5 132.27 266.33 134 266 C135.73 265.67 138.5 267.67 140.5 267 C142.5 266.33 144.58 265.5 146 262 C147.42 258.5 148.17 249.67 149 246 C149.83 242.33 149.83 240.5 151 240 C152.17 239.5 154.5 242 156 243 C157.5 244 158.5 245.5 160 246 C161.5 246.5 163.33 246.83 165 246 C166.67 245.17 168.33 242.17 170 241 C171.67 239.83 173.33 238.33 175 239 C176.67 239.67 178.33 244.33 180 245 C181.67 245.67 183.67 244.17 185 243 C186.33 241.83 187 238 188 238 C189 238 189.83 242 191 243 C192.17 244 193.83 242.5 195 244 C196.17 245.5 197 248.67 198 252 C199 255.33 199.83 261.5 201 264 C202.17 266.5 201.32 266.4 205 267 C208.68 267.6 220.08 267.5 223.1 267.6 L223.1 269.5 L130.1 269.5 Z" fill="#3a3a3b" opacity="0.75"/>
<rect x="139.3" y="199.8" width="1.4" height="69.7" fill="#6a461a" opacity="0.85"/>
<g fill="none" stroke-width="0.85" stroke-linejoin="round">
<path d="M130.1 268.5 C131.75 268.25 137.18 268.08 140 267 C142.82 265.92 145.23 264.83 147 262 C148.77 259.17 149.67 254.33 150.6 250 C151.53 245.67 152.13 239.8 152.6 236 C153.07 232.2 153.07 230 153.4 227.2 C153.73 224.4 154.07 221.08 154.6 219.2 C155.13 217.32 155.98 217.45 156.6 215.9 C157.22 214.35 157.75 209.77 158.3 209.9 C158.85 210.03 159.37 215.3 159.9 216.7 C160.43 218.1 160.97 219.23 161.5 218.3 C162.03 217.37 162.6 214.12 163.1 211.1 C163.6 208.08 163.97 200.2 164.5 200.2 C165.03 200.2 165.73 207.27 166.3 211.1 C166.87 214.93 167.5 219.45 167.9 223.2 C168.3 226.95 168.35 230.8 168.7 233.6 C169.05 236.4 169.18 239.6 170 240 C170.82 240.4 172.6 235.83 173.6 236 C174.6 236.17 175.07 238.33 176 241 C176.93 243.67 178.2 249.53 179.2 252 C180.2 254.47 180.93 255.25 182 255.8 C183.07 256.35 184.73 254.57 185.6 255.3 C186.47 256.03 186.65 258.32 187.2 260.2 C187.75 262.08 188.35 265.33 188.9 266.6 C189.45 267.87 184.82 267.57 190.5 267.8 C196.18 268.03 217.58 267.97 223 268" stroke="#474d9c"/>
<path d="M129.3 269 C129.92 267.17 131.93 262.17 133 258 C134.07 253.83 134.92 245.92 135.7 244 C136.48 242.08 136.9 243.53 137.7 246.5 C138.5 249.47 139.22 258.72 140.5 261.8 C141.78 264.88 143.98 267.68 145.4 265 C146.82 262.32 148.2 249.72 149 245.7 C149.8 241.68 149.6 241.43 150.2 240.9 C150.8 240.37 151.67 241.97 152.6 242.5 C153.53 243.03 154.85 242.5 155.8 244.1 C156.75 245.7 157.22 250.23 158.3 252.1 C159.38 253.97 161.23 255.43 162.3 255.3 C163.37 255.17 163.77 251.43 164.7 251.3 C165.63 251.17 166.83 254.63 167.9 254.5 C168.97 254.37 170.02 252.5 171.1 250.5 C172.18 248.5 173.45 244.03 174.4 242.5 C175.35 240.97 175.87 241.03 176.8 241.3 C177.73 241.57 178.93 243.37 180 244.1 C181.07 244.83 181.87 245.22 183.2 245.7 C184.53 246.18 186.52 247.93 188 247 C189.48 246.07 191.02 242.07 192.1 240.1 C193.18 238.13 193.7 235.35 194.5 235.2 C195.3 235.05 195.97 237.72 196.9 239.2 C197.83 240.68 199.02 242.62 200.1 244.1 C201.18 245.58 202.05 247.43 203.4 248.1 C204.75 248.77 207 247.77 208.2 248.1 C209.4 248.43 209.87 250.63 210.6 250.1 C211.33 249.57 212.07 244.57 212.6 244.9 C213.13 245.23 213.47 248.62 213.8 252.1 C214.13 255.58 212.98 263.58 214.6 265.8 C216.22 268.02 222.02 265.47 223.5 265.4" stroke="#b44a48"/>
<path d="M130.1 269 C130.45 267.83 131.72 266.83 132.2 262 C132.68 257.17 132.75 245.17 133 240 C133.25 234.83 133.45 231 133.7 231 C133.95 231 134.18 234.83 134.5 240 C134.82 245.17 135.02 259.17 135.6 262 C136.18 264.83 137.1 257 138 257 C138.9 257 139.9 262.17 141 262 C142.1 261.83 143.7 258.67 144.6 256 C145.5 253.33 145.87 250.17 146.4 246 C146.93 241.83 147.37 232.67 147.8 231 C148.23 229.33 148.6 235.17 149 236 C149.4 236.83 149.33 235.47 150.2 236 C151.07 236.53 152.58 237.98 154.2 239.2 C155.82 240.42 158.28 242.35 159.9 243.3 C161.52 244.25 162.57 245.72 163.9 244.9 C165.23 244.08 166.83 239.88 167.9 238.4 C168.97 236.92 169.22 235.45 170.3 236 C171.38 236.55 173.05 239.55 174.4 241.7 C175.75 243.85 177.13 247.97 178.4 248.9 C179.67 249.83 181.2 248.23 182 247.3 C182.8 246.37 182.67 244.65 183.2 243.3 C183.73 241.95 184.53 238.93 185.2 239.2 C185.87 239.47 186.32 243.28 187.2 244.9 C188.08 246.52 189.28 248.77 190.5 248.9 C191.72 249.03 193.43 245.83 194.5 245.7 C195.57 245.57 196.23 246.63 196.9 248.1 C197.57 249.57 197.97 251.82 198.5 254.5 C199.03 257.18 199.57 262.18 200.1 264.2 C200.63 266.22 197.8 266.07 201.7 266.6 C205.6 267.13 219.87 267.27 223.5 267.4" stroke="#4aa058"/>
<path d="M130.1 269 C130.75 268.5 132.27 266.33 134 266 C135.73 265.67 138.5 267.67 140.5 267 C142.5 266.33 144.58 265.5 146 262 C147.42 258.5 148.17 249.67 149 246 C149.83 242.33 149.83 240.5 151 240 C152.17 239.5 154.5 242 156 243 C157.5 244 158.5 245.5 160 246 C161.5 246.5 163.33 246.83 165 246 C166.67 245.17 168.33 242.17 170 241 C171.67 239.83 173.33 238.33 175 239 C176.67 239.67 178.33 244.33 180 245 C181.67 245.67 183.67 244.17 185 243 C186.33 241.83 187 238 188 238 C189 238 189.83 242 191 243 C192.17 244 193.83 242.5 195 244 C196.17 245.5 197 248.67 198 252 C199 255.33 199.83 261.5 201 264 C202.17 266.5 201.32 266.4 205 267 C208.68 267.6 220.08 267.5 223.1 267.6" stroke="#b8b8c8" stroke-width="0.5" opacity="0.7"/>
<path d="M130.1 269.5 C150 254 172 232 194.1 215.1 C204 207.6 214 203 222.7 200" stroke="#585858" stroke-width="0.7"/>
</g>
<circle cx="194.1" cy="215.1" r="1.1" fill="#7c6038"/><circle cx="222.7" cy="200.1" r="1.1" fill="#7c6038"/>
<text transform="matrix(1 0.0006 0.0006 1 138 277.13)" font-size="3.9" fill="#b8b8b8" textLength="9.6" lengthAdjust="spacingAndGlyphs" stroke="#b8b8b8" stroke-width="0.1">Input:</text>
<rect x="150.2" y="275.4" width="3.6" height="0.5" fill="#8a8a8a"/>
<text transform="matrix(1 0.0006 0.0006 1 162.1 277.13)" font-size="3.9" fill="#b8b8b8" textLength="13.5" lengthAdjust="spacingAndGlyphs" stroke="#b8b8b8" stroke-width="0.1">Output:</text>
<rect x="178.4" y="275.4" width="3.6" height="0.5" fill="#8a8a8a"/>
<path d="M219 277.4 L222.2 274" stroke="#a8a8a8" stroke-width="1.5" stroke-linecap="round"/>
</g>
<rect x="121.4" y="278.6" width="111.5" height="0.9" fill="#1b1b1c"/>
<g id="color-editor"><rect x="121.4" y="279.5" width="111.5" height="7.9" fill="#2d2d2e"/><path d="M123.2 282.45 l1 1 l-1 1" fill="none" stroke="#9c9c9c" stroke-width="0.5"/><text transform="matrix(1 0.0006 0.0006 1 127.3 285.18)" font-size="4.65" fill="#dadada" textLength="24.9" lengthAdjust="spacingAndGlyphs" stroke="#dadada" stroke-width="0.1">Color Editor</text><path d="M210.8 284.45 L212.8 282.45" stroke="#e4e4e4" stroke-width="1.5" stroke-linecap="round"/><path d="M215.5 283.05 l1.6 -1.4 v0.9 c1.9 0 2.2 1.5 1.4 3 c0 -1.2 -0.5 -1.7 -1.4 -1.7 v0.8 z" fill="#d2d2d2"/><rect x="220.9" y="282.05" width="3.6" height="2.9" rx="0.3" fill="#6e6e6e"/><rect x="226.4" y="283.15" width="4.4" height="0.75" rx="0.3" fill="#8c8c8c"/></g>
<rect x="121.4" y="287.4" width="111.5" height="0.9" fill="#1b1b1c"/>
<g id="color-balance">
<rect x="121.4" y="288.3" width="111.5" height="8.5" fill="#2d2d2e"/><path d="M122.8 291.95 l1 1 l1 -1" fill="none" stroke="#9c9c9c" stroke-width="0.5"/><text transform="matrix(1 0.0006 0.0006 1 127.3 294.28)" font-size="4.65" fill="#dadada" textLength="29.3" lengthAdjust="spacingAndGlyphs" stroke="#dadada" stroke-width="0.1">Color Balance</text><path d="M210.8 293.55 L212.8 291.55" stroke="#e4e4e4" stroke-width="1.5" stroke-linecap="round"/><path d="M215.5 292.15 l1.6 -1.4 v0.9 c1.9 0 2.2 1.5 1.4 3 c0 -1.2 -0.5 -1.7 -1.4 -1.7 v0.8 z" fill="#d2d2d2"/><rect x="220.9" y="291.15" width="3.6" height="2.9" rx="0.3" fill="#6e6e6e"/><rect x="226.4" y="292.25" width="4.4" height="0.75" rx="0.3" fill="#8c8c8c"/>
<text transform="matrix(1 0.0006 0.0006 1 125.1 304.66)" font-size="3.7" fill="#c4c4c4" textLength="11" lengthAdjust="spacingAndGlyphs" stroke="#c4c4c4" stroke-width="0.1">Master</text>
<text transform="matrix(1 0.0006 0.0006 1 145.8 304.66)" font-size="3.7" fill="#d8862a" textLength="11.7" lengthAdjust="spacingAndGlyphs" stroke="#d8862a" stroke-width="0.1">3-Way</text>
<text transform="matrix(1 0.0006 0.0006 1 167 304.66)" font-size="3.7" fill="#c4c4c4" textLength="13" lengthAdjust="spacingAndGlyphs" stroke="#c4c4c4" stroke-width="0.1">Shadow</text>
<text transform="matrix(1 0.0006 0.0006 1 189.7 304.66)" font-size="3.7" fill="#c4c4c4" textLength="13.6" lengthAdjust="spacingAndGlyphs" stroke="#c4c4c4" stroke-width="0.1">Midtone</text>
<text transform="matrix(1 0.0006 0.0006 1 213.2 304.66)" font-size="3.7" fill="#c4c4c4" textLength="14.9" lengthAdjust="spacingAndGlyphs" stroke="#c4c4c4" stroke-width="0.1">Highlight</text>
<rect x="124" y="306.4" width="107" height="0.4" fill="#3a3a3a"/>
<rect x="143.8" y="306.2" width="16.5" height="0.65" fill="#cc7e24"/>
<g fill="none" stroke-width="1.5"><path d="M176.64 313.7 A16.4 16.4 0 0 1 178.39 313.78" stroke="#4fdb15"/><path d="M178.07 313.75 A16.4 16.4 0 0 1 179.81 313.98" stroke="#5edb15"/><path d="M179.49 313.92 A16.4 16.4 0 0 1 181.2 314.3" stroke="#6edb15"/><path d="M180.89 314.22 A16.4 16.4 0 0 1 182.56 314.75" stroke="#7edb15"/><path d="M182.25 314.63 A16.4 16.4 0 0 1 183.88 315.31" stroke="#8ddb15"/><path d="M183.58 315.17 A16.4 16.4 0 0 1 185.14 315.98" stroke="#9ddb15"/><path d="M184.86 315.82 A16.4 16.4 0 0 1 186.34 316.76" stroke="#addb15"/><path d="M186.07 316.57 A16.4 16.4 0 0 1 187.47 317.64" stroke="#bddb15"/><path d="M187.22 317.43 A16.4 16.4 0 0 1 188.51 318.62" stroke="#ccdb15"/><path d="M188.28 318.39 A16.4 16.4 0 0 1 189.47 319.68" stroke="#dbd915"/><path d="M189.26 319.43 A16.4 16.4 0 0 1 190.33 320.83" stroke="#dbc915"/><path d="M190.14 320.56 A16.4 16.4 0 0 1 191.08 322.04" stroke="#dbb915"/><path d="M190.92 321.76 A16.4 16.4 0 0 1 191.73 323.32" stroke="#dba915"/><path d="M191.59 323.02 A16.4 16.4 0 0 1 192.27 324.65" stroke="#db9915"/><path d="M192.15 324.34 A16.4 16.4 0 0 1 192.68 326.01" stroke="#db8915"/><path d="M192.6 325.7 A16.4 16.4 0 0 1 192.98 327.41" stroke="#db7915"/><path d="M192.92 327.09 A16.4 16.4 0 0 1 193.15 328.83" stroke="#db6915"/><path d="M193.12 328.51 A16.4 16.4 0 0 1 193.2 330.26" stroke="#db5915"/><path d="M193.2 329.94 A16.4 16.4 0 0 1 193.12 331.69" stroke="#db4815"/><path d="M193.15 331.37 A16.4 16.4 0 0 1 192.92 333.11" stroke="#db3615"/><path d="M192.98 332.79 A16.4 16.4 0 0 1 192.6 334.5" stroke="#db2315"/><path d="M192.68 334.19 A16.4 16.4 0 0 1 192.15 335.86" stroke="#db151a"/><path d="M192.27 335.55 A16.4 16.4 0 0 1 191.59 337.18" stroke="#db152c"/><path d="M191.73 336.88 A16.4 16.4 0 0 1 190.92 338.44" stroke="#db153e"/><path d="M191.08 338.16 A16.4 16.4 0 0 1 190.14 339.64" stroke="#db1550"/><path d="M190.33 339.37 A16.4 16.4 0 0 1 189.26 340.77" stroke="#db1564"/><path d="M189.47 340.52 A16.4 16.4 0 0 1 188.28 341.81" stroke="#db1577"/><path d="M188.51 341.58 A16.4 16.4 0 0 1 187.22 342.77" stroke="#db158a"/><path d="M187.47 342.56 A16.4 16.4 0 0 1 186.07 343.63" stroke="#db159d"/><path d="M186.34 343.44 A16.4 16.4 0 0 1 184.86 344.38" stroke="#db15b0"/><path d="M185.14 344.22 A16.4 16.4 0 0 1 183.58 345.03" stroke="#db15c3"/><path d="M183.88 344.89 A16.4 16.4 0 0 1 182.25 345.57" stroke="#db15d7"/><path d="M182.56 345.45 A16.4 16.4 0 0 1 180.89 345.98" stroke="#cc15db"/><path d="M181.2 345.9 A16.4 16.4 0 0 1 179.49 346.28" stroke="#b915db"/><path d="M179.81 346.22 A16.4 16.4 0 0 1 178.07 346.45" stroke="#a515db"/><path d="M178.39 346.42 A16.4 16.4 0 0 1 176.64 346.5" stroke="#9215db"/><path d="M176.96 346.5 A16.4 16.4 0 0 1 175.21 346.42" stroke="#8115db"/><path d="M175.53 346.45 A16.4 16.4 0 0 1 173.79 346.22" stroke="#7315db"/><path d="M174.11 346.28 A16.4 16.4 0 0 1 172.4 345.9" stroke="#6415db"/><path d="M172.71 345.98 A16.4 16.4 0 0 1 171.04 345.45" stroke="#5515db"/><path d="M171.35 345.57 A16.4 16.4 0 0 1 169.72 344.89" stroke="#4715db"/><path d="M170.02 345.03 A16.4 16.4 0 0 1 168.46 344.22" stroke="#3815db"/><path d="M168.74 344.38 A16.4 16.4 0 0 1 167.26 343.44" stroke="#2a15db"/><path d="M167.53 343.63 A16.4 16.4 0 0 1 166.13 342.56" stroke="#1b15db"/><path d="M166.38 342.77 A16.4 16.4 0 0 1 165.09 341.58" stroke="#151fdb"/><path d="M165.32 341.81 A16.4 16.4 0 0 1 164.13 340.52" stroke="#152fdb"/><path d="M164.34 340.77 A16.4 16.4 0 0 1 163.27 339.37" stroke="#1541db"/><path d="M163.46 339.64 A16.4 16.4 0 0 1 162.52 338.16" stroke="#1554db"/><path d="M162.68 338.44 A16.4 16.4 0 0 1 161.87 336.88" stroke="#1566db"/><path d="M162.01 337.18 A16.4 16.4 0 0 1 161.33 335.55" stroke="#1578db"/><path d="M161.45 335.86 A16.4 16.4 0 0 1 160.92 334.19" stroke="#158adb"/><path d="M161 334.5 A16.4 16.4 0 0 1 160.62 332.79" stroke="#159ddb"/><path d="M160.68 333.11 A16.4 16.4 0 0 1 160.45 331.37" stroke="#15afdb"/><path d="M160.48 331.69 A16.4 16.4 0 0 1 160.4 329.94" stroke="#15c1db"/><path d="M160.4 330.26 A16.4 16.4 0 0 1 160.48 328.51" stroke="#15d2db"/><path d="M160.45 328.83 A16.4 16.4 0 0 1 160.68 327.09" stroke="#15dbd5"/><path d="M160.62 327.41 A16.4 16.4 0 0 1 161 325.7" stroke="#15dbc7"/><path d="M160.92 326.01 A16.4 16.4 0 0 1 161.45 324.34" stroke="#15dbb8"/><path d="M161.33 324.65 A16.4 16.4 0 0 1 162.01 323.02" stroke="#15dba9"/><path d="M161.87 323.32 A16.4 16.4 0 0 1 162.68 321.76" stroke="#15db9b"/><path d="M162.52 322.04 A16.4 16.4 0 0 1 163.46 320.56" stroke="#15db8c"/><path d="M163.27 320.83 A16.4 16.4 0 0 1 164.34 319.43" stroke="#15db7e"/><path d="M164.13 319.68 A16.4 16.4 0 0 1 165.32 318.39" stroke="#15db6f"/><path d="M165.09 318.62 A16.4 16.4 0 0 1 166.38 317.43" stroke="#15db60"/><path d="M166.13 317.64 A16.4 16.4 0 0 1 167.53 316.57" stroke="#15db52"/><path d="M167.26 316.76 A16.4 16.4 0 0 1 168.74 315.82" stroke="#15db43"/><path d="M168.46 315.98 A16.4 16.4 0 0 1 170.02 315.17" stroke="#15db34"/><path d="M169.72 315.31 A16.4 16.4 0 0 1 171.35 314.63" stroke="#15db26"/><path d="M171.04 314.75 A16.4 16.4 0 0 1 172.71 314.22" stroke="#15db17"/><path d="M172.4 314.3 A16.4 16.4 0 0 1 174.11 313.92" stroke="#22db15"/><path d="M173.79 313.98 A16.4 16.4 0 0 1 175.53 313.75" stroke="#31db15"/><path d="M175.21 313.78 A16.4 16.4 0 0 1 176.96 313.7" stroke="#3fdb15"/></g>
<path d="M158.29 317.14 A22.6 22.6 0 0 0 158.29 343.06" fill="none" stroke="url(#arcBlue)" stroke-width="1.55" stroke-linecap="round"/><path d="M155.34 337.2 h-1.6" stroke="#e8e8e8" stroke-width="0.9"/>
<path d="M195.8 316.79 A23.2 23.2 0 0 1 195.8 343.41" fill="none" stroke="url(#arcGrey)" stroke-width="1.55" stroke-linecap="round"/><path d="M200 330.1 h1.6" stroke="#cfcfcf" stroke-width="0.9"/>
<circle cx="172.6" cy="330.4" r="1.9" fill="none" stroke="#b06a2c" stroke-width="0.6"/>
<path d="M157.4 332.6 h2.6" stroke="#20d8d8" stroke-width="1"/>
<text transform="matrix(1 0.0006 0.0006 1 126.9 351.22)" font-size="3.6" fill="#a8a8a8" textLength="14.1" lengthAdjust="spacingAndGlyphs" stroke="#a8a8a8" stroke-width="0.1">Shadow</text>
<text transform="matrix(1 0.0006 0.0006 1 169.1 353.92)" font-size="3.6" fill="#a8a8a8" textLength="14.5" lengthAdjust="spacingAndGlyphs" stroke="#a8a8a8" stroke-width="0.1">Midtone</text>
<text transform="matrix(1 0.0006 0.0006 1 210.2 351.22)" font-size="3.6" fill="#a8a8a8" textLength="16.1" lengthAdjust="spacingAndGlyphs" stroke="#a8a8a8" stroke-width="0.1">Highlight</text>
<g fill="none" stroke-width="1.5"><path d="M148.23 355.3 A17.1 17.1 0 0 1 150.06 355.38" stroke="#4fdb15"/><path d="M149.72 355.35 A17.1 17.1 0 0 1 151.54 355.59" stroke="#5edb15"/><path d="M151.2 355.53 A17.1 17.1 0 0 1 152.99 355.93" stroke="#6edb15"/><path d="M152.66 355.84 A17.1 17.1 0 0 1 154.41 356.39" stroke="#7edb15"/><path d="M154.09 356.27 A17.1 17.1 0 0 1 155.78 356.98" stroke="#8ddb15"/><path d="M155.47 356.83 A17.1 17.1 0 0 1 157.1 357.68" stroke="#9ddb15"/><path d="M156.8 357.51 A17.1 17.1 0 0 1 158.35 358.49" stroke="#addb15"/><path d="M158.07 358.3 A17.1 17.1 0 0 1 159.52 359.41" stroke="#bddb15"/><path d="M159.26 359.19 A17.1 17.1 0 0 1 160.61 360.43" stroke="#ccdb15"/><path d="M160.37 360.19 A17.1 17.1 0 0 1 161.61 361.54" stroke="#dbd915"/><path d="M161.39 361.28 A17.1 17.1 0 0 1 162.5 362.73" stroke="#dbc915"/><path d="M162.31 362.45 A17.1 17.1 0 0 1 163.29 364" stroke="#dbb915"/><path d="M163.12 363.7 A17.1 17.1 0 0 1 163.97 365.33" stroke="#dba915"/><path d="M163.82 365.02 A17.1 17.1 0 0 1 164.53 366.71" stroke="#db9915"/><path d="M164.41 366.39 A17.1 17.1 0 0 1 164.96 368.14" stroke="#db8915"/><path d="M164.87 367.81 A17.1 17.1 0 0 1 165.27 369.6" stroke="#db7915"/><path d="M165.21 369.26 A17.1 17.1 0 0 1 165.45 371.08" stroke="#db6915"/><path d="M165.42 370.74 A17.1 17.1 0 0 1 165.5 372.57" stroke="#db5915"/><path d="M165.5 372.23 A17.1 17.1 0 0 1 165.42 374.06" stroke="#db4815"/><path d="M165.45 373.72 A17.1 17.1 0 0 1 165.21 375.54" stroke="#db3615"/><path d="M165.27 375.2 A17.1 17.1 0 0 1 164.87 376.99" stroke="#db2315"/><path d="M164.96 376.66 A17.1 17.1 0 0 1 164.41 378.41" stroke="#db151a"/><path d="M164.53 378.09 A17.1 17.1 0 0 1 163.82 379.78" stroke="#db152c"/><path d="M163.97 379.47 A17.1 17.1 0 0 1 163.12 381.1" stroke="#db153e"/><path d="M163.29 380.8 A17.1 17.1 0 0 1 162.31 382.35" stroke="#db1550"/><path d="M162.5 382.07 A17.1 17.1 0 0 1 161.39 383.52" stroke="#db1564"/><path d="M161.61 383.26 A17.1 17.1 0 0 1 160.37 384.61" stroke="#db1577"/><path d="M160.61 384.37 A17.1 17.1 0 0 1 159.26 385.61" stroke="#db158a"/><path d="M159.52 385.39 A17.1 17.1 0 0 1 158.07 386.5" stroke="#db159d"/><path d="M158.35 386.31 A17.1 17.1 0 0 1 156.8 387.29" stroke="#db15b0"/><path d="M157.1 387.12 A17.1 17.1 0 0 1 155.47 387.97" stroke="#db15c3"/><path d="M155.78 387.82 A17.1 17.1 0 0 1 154.09 388.53" stroke="#db15d7"/><path d="M154.41 388.41 A17.1 17.1 0 0 1 152.66 388.96" stroke="#cc15db"/><path d="M152.99 388.87 A17.1 17.1 0 0 1 151.2 389.27" stroke="#b915db"/><path d="M151.54 389.21 A17.1 17.1 0 0 1 149.72 389.45" stroke="#a515db"/><path d="M150.06 389.42 A17.1 17.1 0 0 1 148.23 389.5" stroke="#9215db"/><path d="M148.57 389.5 A17.1 17.1 0 0 1 146.74 389.42" stroke="#8115db"/><path d="M147.08 389.45 A17.1 17.1 0 0 1 145.26 389.21" stroke="#7315db"/><path d="M145.6 389.27 A17.1 17.1 0 0 1 143.81 388.87" stroke="#6415db"/><path d="M144.14 388.96 A17.1 17.1 0 0 1 142.39 388.41" stroke="#5515db"/><path d="M142.71 388.53 A17.1 17.1 0 0 1 141.02 387.82" stroke="#4715db"/><path d="M141.33 387.97 A17.1 17.1 0 0 1 139.7 387.12" stroke="#3815db"/><path d="M140 387.29 A17.1 17.1 0 0 1 138.45 386.31" stroke="#2a15db"/><path d="M138.73 386.5 A17.1 17.1 0 0 1 137.28 385.39" stroke="#1b15db"/><path d="M137.54 385.61 A17.1 17.1 0 0 1 136.19 384.37" stroke="#151fdb"/><path d="M136.43 384.61 A17.1 17.1 0 0 1 135.19 383.26" stroke="#152fdb"/><path d="M135.41 383.52 A17.1 17.1 0 0 1 134.3 382.07" stroke="#1541db"/><path d="M134.49 382.35 A17.1 17.1 0 0 1 133.51 380.8" stroke="#1554db"/><path d="M133.68 381.1 A17.1 17.1 0 0 1 132.83 379.47" stroke="#1566db"/><path d="M132.98 379.78 A17.1 17.1 0 0 1 132.27 378.09" stroke="#1578db"/><path d="M132.39 378.41 A17.1 17.1 0 0 1 131.84 376.66" stroke="#158adb"/><path d="M131.93 376.99 A17.1 17.1 0 0 1 131.53 375.2" stroke="#159ddb"/><path d="M131.59 375.54 A17.1 17.1 0 0 1 131.35 373.72" stroke="#15afdb"/><path d="M131.38 374.06 A17.1 17.1 0 0 1 131.3 372.23" stroke="#15c1db"/><path d="M131.3 372.57 A17.1 17.1 0 0 1 131.38 370.74" stroke="#15d2db"/><path d="M131.35 371.08 A17.1 17.1 0 0 1 131.59 369.26" stroke="#15dbd5"/><path d="M131.53 369.6 A17.1 17.1 0 0 1 131.93 367.81" stroke="#15dbc7"/><path d="M131.84 368.14 A17.1 17.1 0 0 1 132.39 366.39" stroke="#15dbb8"/><path d="M132.27 366.71 A17.1 17.1 0 0 1 132.98 365.02" stroke="#15dba9"/><path d="M132.83 365.33 A17.1 17.1 0 0 1 133.68 363.7" stroke="#15db9b"/><path d="M133.51 364 A17.1 17.1 0 0 1 134.49 362.45" stroke="#15db8c"/><path d="M134.3 362.73 A17.1 17.1 0 0 1 135.41 361.28" stroke="#15db7e"/><path d="M135.19 361.54 A17.1 17.1 0 0 1 136.43 360.19" stroke="#15db6f"/><path d="M136.19 360.43 A17.1 17.1 0 0 1 137.54 359.19" stroke="#15db60"/><path d="M137.28 359.41 A17.1 17.1 0 0 1 138.73 358.3" stroke="#15db52"/><path d="M138.45 358.49 A17.1 17.1 0 0 1 140 357.51" stroke="#15db43"/><path d="M139.7 357.68 A17.1 17.1 0 0 1 141.33 356.83" stroke="#15db34"/><path d="M141.02 356.98 A17.1 17.1 0 0 1 142.71 356.27" stroke="#15db26"/><path d="M142.39 356.39 A17.1 17.1 0 0 1 144.14 355.84" stroke="#15db17"/><path d="M143.81 355.93 A17.1 17.1 0 0 1 145.6 355.53" stroke="#22db15"/><path d="M145.26 355.59 A17.1 17.1 0 0 1 147.08 355.35" stroke="#31db15"/><path d="M146.74 355.38 A17.1 17.1 0 0 1 148.57 355.3" stroke="#3fdb15"/></g>
<path d="M129.15 358.92 A23.5 23.5 0 0 0 129.15 385.88" fill="none" stroke="url(#arcGreen)" stroke-width="1.55" stroke-linecap="round"/><path d="M126.34 380.5 h-1.6" stroke="#e8e8e8" stroke-width="0.9"/>
<path d="M167.32 359.15 A23.1 23.1 0 0 1 167.32 385.65" fill="none" stroke="url(#arcGrey)" stroke-width="1.55" stroke-linecap="round"/><path d="M171.5 372.8 h1.6" stroke="#cfcfcf" stroke-width="0.9"/>
<circle cx="148.2" cy="368.9" r="1.6" fill="none" stroke="#6a6a6a" stroke-width="0.55"/><path d="M148.2 370.5 v2.2" stroke="#6a6a6a" stroke-width="0.55"/>
<path d="M148.2 353.6 v1.8" stroke="#78c840" stroke-width="1"/>
<g fill="none" stroke-width="1.5"><path d="M204.63 355.3 A17.1 17.1 0 0 1 206.46 355.38" stroke="#4fdb15"/><path d="M206.12 355.35 A17.1 17.1 0 0 1 207.94 355.59" stroke="#5edb15"/><path d="M207.6 355.53 A17.1 17.1 0 0 1 209.39 355.93" stroke="#6edb15"/><path d="M209.06 355.84 A17.1 17.1 0 0 1 210.81 356.39" stroke="#7edb15"/><path d="M210.49 356.27 A17.1 17.1 0 0 1 212.18 356.98" stroke="#8ddb15"/><path d="M211.87 356.83 A17.1 17.1 0 0 1 213.5 357.68" stroke="#9ddb15"/><path d="M213.2 357.51 A17.1 17.1 0 0 1 214.75 358.49" stroke="#addb15"/><path d="M214.47 358.3 A17.1 17.1 0 0 1 215.92 359.41" stroke="#bddb15"/><path d="M215.66 359.19 A17.1 17.1 0 0 1 217.01 360.43" stroke="#ccdb15"/><path d="M216.77 360.19 A17.1 17.1 0 0 1 218.01 361.54" stroke="#dbd915"/><path d="M217.79 361.28 A17.1 17.1 0 0 1 218.9 362.73" stroke="#dbc915"/><path d="M218.71 362.45 A17.1 17.1 0 0 1 219.69 364" stroke="#dbb915"/><path d="M219.52 363.7 A17.1 17.1 0 0 1 220.37 365.33" stroke="#dba915"/><path d="M220.22 365.02 A17.1 17.1 0 0 1 220.93 366.71" stroke="#db9915"/><path d="M220.81 366.39 A17.1 17.1 0 0 1 221.36 368.14" stroke="#db8915"/><path d="M221.27 367.81 A17.1 17.1 0 0 1 221.67 369.6" stroke="#db7915"/><path d="M221.61 369.26 A17.1 17.1 0 0 1 221.85 371.08" stroke="#db6915"/><path d="M221.82 370.74 A17.1 17.1 0 0 1 221.9 372.57" stroke="#db5915"/><path d="M221.9 372.23 A17.1 17.1 0 0 1 221.82 374.06" stroke="#db4815"/><path d="M221.85 373.72 A17.1 17.1 0 0 1 221.61 375.54" stroke="#db3615"/><path d="M221.67 375.2 A17.1 17.1 0 0 1 221.27 376.99" stroke="#db2315"/><path d="M221.36 376.66 A17.1 17.1 0 0 1 220.81 378.41" stroke="#db151a"/><path d="M220.93 378.09 A17.1 17.1 0 0 1 220.22 379.78" stroke="#db152c"/><path d="M220.37 379.47 A17.1 17.1 0 0 1 219.52 381.1" stroke="#db153e"/><path d="M219.69 380.8 A17.1 17.1 0 0 1 218.71 382.35" stroke="#db1550"/><path d="M218.9 382.07 A17.1 17.1 0 0 1 217.79 383.52" stroke="#db1564"/><path d="M218.01 383.26 A17.1 17.1 0 0 1 216.77 384.61" stroke="#db1577"/><path d="M217.01 384.37 A17.1 17.1 0 0 1 215.66 385.61" stroke="#db158a"/><path d="M215.92 385.39 A17.1 17.1 0 0 1 214.47 386.5" stroke="#db159d"/><path d="M214.75 386.31 A17.1 17.1 0 0 1 213.2 387.29" stroke="#db15b0"/><path d="M213.5 387.12 A17.1 17.1 0 0 1 211.87 387.97" stroke="#db15c3"/><path d="M212.18 387.82 A17.1 17.1 0 0 1 210.49 388.53" stroke="#db15d7"/><path d="M210.81 388.41 A17.1 17.1 0 0 1 209.06 388.96" stroke="#cc15db"/><path d="M209.39 388.87 A17.1 17.1 0 0 1 207.6 389.27" stroke="#b915db"/><path d="M207.94 389.21 A17.1 17.1 0 0 1 206.12 389.45" stroke="#a515db"/><path d="M206.46 389.42 A17.1 17.1 0 0 1 204.63 389.5" stroke="#9215db"/><path d="M204.97 389.5 A17.1 17.1 0 0 1 203.14 389.42" stroke="#8115db"/><path d="M203.48 389.45 A17.1 17.1 0 0 1 201.66 389.21" stroke="#7315db"/><path d="M202 389.27 A17.1 17.1 0 0 1 200.21 388.87" stroke="#6415db"/><path d="M200.54 388.96 A17.1 17.1 0 0 1 198.79 388.41" stroke="#5515db"/><path d="M199.11 388.53 A17.1 17.1 0 0 1 197.42 387.82" stroke="#4715db"/><path d="M197.73 387.97 A17.1 17.1 0 0 1 196.1 387.12" stroke="#3815db"/><path d="M196.4 387.29 A17.1 17.1 0 0 1 194.85 386.31" stroke="#2a15db"/><path d="M195.13 386.5 A17.1 17.1 0 0 1 193.68 385.39" stroke="#1b15db"/><path d="M193.94 385.61 A17.1 17.1 0 0 1 192.59 384.37" stroke="#151fdb"/><path d="M192.83 384.61 A17.1 17.1 0 0 1 191.59 383.26" stroke="#152fdb"/><path d="M191.81 383.52 A17.1 17.1 0 0 1 190.7 382.07" stroke="#1541db"/><path d="M190.89 382.35 A17.1 17.1 0 0 1 189.91 380.8" stroke="#1554db"/><path d="M190.08 381.1 A17.1 17.1 0 0 1 189.23 379.47" stroke="#1566db"/><path d="M189.38 379.78 A17.1 17.1 0 0 1 188.67 378.09" stroke="#1578db"/><path d="M188.79 378.41 A17.1 17.1 0 0 1 188.24 376.66" stroke="#158adb"/><path d="M188.33 376.99 A17.1 17.1 0 0 1 187.93 375.2" stroke="#159ddb"/><path d="M187.99 375.54 A17.1 17.1 0 0 1 187.75 373.72" stroke="#15afdb"/><path d="M187.78 374.06 A17.1 17.1 0 0 1 187.7 372.23" stroke="#15c1db"/><path d="M187.7 372.57 A17.1 17.1 0 0 1 187.78 370.74" stroke="#15d2db"/><path d="M187.75 371.08 A17.1 17.1 0 0 1 187.99 369.26" stroke="#15dbd5"/><path d="M187.93 369.6 A17.1 17.1 0 0 1 188.33 367.81" stroke="#15dbc7"/><path d="M188.24 368.14 A17.1 17.1 0 0 1 188.79 366.39" stroke="#15dbb8"/><path d="M188.67 366.71 A17.1 17.1 0 0 1 189.38 365.02" stroke="#15dba9"/><path d="M189.23 365.33 A17.1 17.1 0 0 1 190.08 363.7" stroke="#15db9b"/><path d="M189.91 364 A17.1 17.1 0 0 1 190.89 362.45" stroke="#15db8c"/><path d="M190.7 362.73 A17.1 17.1 0 0 1 191.81 361.28" stroke="#15db7e"/><path d="M191.59 361.54 A17.1 17.1 0 0 1 192.83 360.19" stroke="#15db6f"/><path d="M192.59 360.43 A17.1 17.1 0 0 1 193.94 359.19" stroke="#15db60"/><path d="M193.68 359.41 A17.1 17.1 0 0 1 195.13 358.3" stroke="#15db52"/><path d="M194.85 358.49 A17.1 17.1 0 0 1 196.4 357.51" stroke="#15db43"/><path d="M196.1 357.68 A17.1 17.1 0 0 1 197.73 356.83" stroke="#15db34"/><path d="M197.42 356.98 A17.1 17.1 0 0 1 199.11 356.27" stroke="#15db26"/><path d="M198.79 356.39 A17.1 17.1 0 0 1 200.54 355.84" stroke="#15db17"/><path d="M200.21 355.93 A17.1 17.1 0 0 1 202 355.53" stroke="#22db15"/><path d="M201.66 355.59 A17.1 17.1 0 0 1 203.48 355.35" stroke="#31db15"/><path d="M203.14 355.38 A17.1 17.1 0 0 1 204.97 355.3" stroke="#3fdb15"/></g>
<path d="M185.71 359.04 A23.3 23.3 0 0 0 185.71 385.76" fill="none" stroke="url(#arcRed)" stroke-width="1.55" stroke-linecap="round"/><path d="M181.57 374.2 h-1.6" stroke="#f0c0b8" stroke-width="0.9"/>
<path d="M223.97 358.98 A23.4 23.4 0 0 1 223.97 385.82" fill="none" stroke="url(#arcGrey)" stroke-width="1.55" stroke-linecap="round"/><path d="M228.2 372.8 h1.6" stroke="#cfcfcf" stroke-width="0.9"/>
<circle cx="212.2" cy="372.4" r="2.2" fill="none" stroke="#6a6a6a" stroke-width="0.55"/><circle cx="205" cy="372.5" r="0.5" fill="#555"/>
<path d="M221.6 371 h2.6" stroke="#f02818" stroke-width="1.3"/>
</g>
<rect x="121.4" y="395.6" width="111.5" height="1.8" fill="#1b1b1c"/>
<rect x="121.4" y="396.5" width="111.5" height="0.9" fill="#1b1b1c"/>
<g class="tool-row"><rect x="121.4" y="397.4" width="111.5" height="7.8" fill="#2d2d2e"/><path d="M123.2 400.3 l1 1 l-1 1" fill="none" stroke="#9c9c9c" stroke-width="0.5"/><text transform="matrix(1 0.0006 0.0006 1 127.3 403.03)" font-size="4.65" fill="#dadada" textLength="29.2" lengthAdjust="spacingAndGlyphs" stroke="#dadada" stroke-width="0.1">Black &amp; White</text><path d="M210.8 402.3 L212.8 400.3" stroke="#e4e4e4" stroke-width="1.5" stroke-linecap="round"/><path d="M215.5 400.9 l1.6 -1.4 v0.9 c1.9 0 2.2 1.5 1.4 3 c0 -1.2 -0.5 -1.7 -1.4 -1.7 v0.8 z" fill="#d2d2d2"/><rect x="220.9" y="399.9" width="3.6" height="2.9" rx="0.3" fill="#6e6e6e"/><rect x="226.4" y="401" width="4.4" height="0.75" rx="0.3" fill="#8c8c8c"/></g>
<rect x="121.4" y="405.2" width="111.5" height="0.9" fill="#1b1b1c"/>
<g class="tool-row"><rect x="121.4" y="406.1" width="111.5" height="7.6" fill="#2d2d2e"/><path d="M123.2 408.9 l1 1 l-1 1" fill="none" stroke="#9c9c9c" stroke-width="0.5"/><text transform="matrix(1 0.0006 0.0006 1 127.3 411.63)" font-size="4.65" fill="#dadada" textLength="13.9" lengthAdjust="spacingAndGlyphs" stroke="#dadada" stroke-width="0.1">Clarity</text><path d="M210.8 410.9 L212.8 408.9" stroke="#e4e4e4" stroke-width="1.5" stroke-linecap="round"/><path d="M215.5 409.5 l1.6 -1.4 v0.9 c1.9 0 2.2 1.5 1.4 3 c0 -1.2 -0.5 -1.7 -1.4 -1.7 v0.8 z" fill="#d2d2d2"/><rect x="220.9" y="408.5" width="3.6" height="2.9" rx="0.3" fill="#6e6e6e"/><rect x="226.4" y="409.6" width="4.4" height="0.75" rx="0.3" fill="#8c8c8c"/></g>
<rect x="121.4" y="413.7" width="111.5" height="0.9" fill="#1b1b1c"/>
<g class="tool-row"><rect x="121.4" y="414.6" width="111.5" height="7.6" fill="#2d2d2e"/><path d="M123.2 417.4 l1 1 l-1 1" fill="none" stroke="#9c9c9c" stroke-width="0.5"/><text transform="matrix(1 0.0006 0.0006 1 127.3 420.13)" font-size="4.65" fill="#dadada" textLength="15.5" lengthAdjust="spacingAndGlyphs" stroke="#dadada" stroke-width="0.1">Dehaze</text><path d="M216 419.4 L218 417.4" stroke="#e4e4e4" stroke-width="1.5" stroke-linecap="round"/><path d="M220.9 418 l1.6 -1.4 v0.9 c1.9 0 2.2 1.5 1.4 3 c0 -1.2 -0.5 -1.7 -1.4 -1.7 v0.8 z" fill="#d2d2d2"/><rect x="226.4" y="418.1" width="4.4" height="0.75" rx="0.3" fill="#8c8c8c"/></g>
<rect x="121.4" y="422.2" width="111.5" height="0.9" fill="#1b1b1c"/>
<g class="tool-row"><rect x="121.4" y="423.1" width="111.5" height="8.5" fill="#2d2d2e"/><path d="M123.2 426.35 l1 1 l-1 1" fill="none" stroke="#9c9c9c" stroke-width="0.5"/><text transform="matrix(1 0.0006 0.0006 1 127.3 429.08)" font-size="4.65" fill="#dadada" textLength="21.7" lengthAdjust="spacingAndGlyphs" stroke="#dadada" stroke-width="0.1">Vignetting</text><path d="M210.8 428.35 L212.8 426.35" stroke="#e4e4e4" stroke-width="1.5" stroke-linecap="round"/><path d="M215.5 426.95 l1.6 -1.4 v0.9 c1.9 0 2.2 1.5 1.4 3 c0 -1.2 -0.5 -1.7 -1.4 -1.7 v0.8 z" fill="#d2d2d2"/><rect x="220.9" y="425.95" width="3.6" height="2.9" rx="0.3" fill="#6e6e6e"/><rect x="226.4" y="427.05" width="4.4" height="0.75" rx="0.3" fill="#8c8c8c"/></g>
</g>
<g id="viewer-toolbar">
<rect x="120" y="103.3" width="560" height="0.6" fill="#171717"/>
<rect x="238.6" y="103.9" width="441.4" height="8.9" fill="#2a2a2b"/>
<rect x="238.6" y="112.6" width="441.4" height="1.6" fill="#0d0d0d"/>
<rect x="242.4" y="106.2" width="1.9" height="1.7" fill="#cc7e22"/>
<rect x="242.4" y="108.5" width="1.9" height="1.7" fill="#cc7e22"/>
<rect x="244.9" y="106.2" width="1.9" height="1.7" fill="#cc7e22"/>
<rect x="244.9" y="108.5" width="1.9" height="1.7" fill="#cc7e22"/>
<rect x="250.4" y="106.3" width="4.6" height="3.8" rx="0.4" fill="#2e3436" stroke="#a4b0b4" stroke-width="0.7"/>
<rect x="257.8" y="106.3" width="4.9" height="3.8" rx="0.4" fill="#6a4214" stroke="#d08426" stroke-width="0.8"/><path d="M260.25 106.5 v3.4" stroke="#d08426" stroke-width="0.6"/>
<rect x="265.6" y="105.5" width="35.4" height="5.4" rx="1.2" fill="#353536"/>
<text transform="matrix(1 0.0006 0.0006 1 268.1 109.79)" font-size="4.1" fill="#d0d0d0" textLength="22" lengthAdjust="spacingAndGlyphs" stroke="#d0d0d0" stroke-width="0.1">Image Layer</text>
<path d="M297.6 107.4 l0.9 -1 l0.9 1 M297.6 109 l0.9 1 l0.9 -1" fill="none" stroke="#bdbdbd" stroke-width="0.45"/>
<path d="M303.6 108.2 h3.6 M305.4 106.4 v3.6" stroke="#d8d8d8" stroke-width="0.8"/>
<path d="M309.25 107.9 l0.75 0.8 l0.75 -0.8" fill="none" stroke="#8a8a8a" stroke-width="0.45"/>
<text transform="matrix(1 0.0006 0.0006 1 445.7 109.63)" font-size="3.9" fill="#cc4c4a" textLength="4.2" lengthAdjust="spacingAndGlyphs" stroke="#cc4c4a" stroke-width="0.1">24</text>
<text transform="matrix(1 0.0006 0.0006 1 454.9 109.63)" font-size="3.9" fill="#3cb44c" textLength="4.6" lengthAdjust="spacingAndGlyphs" stroke="#3cb44c" stroke-width="0.1">22</text>
<text transform="matrix(1 0.0006 0.0006 1 465.4 109.63)" font-size="3.9" fill="#6066c8" textLength="2.4" lengthAdjust="spacingAndGlyphs" stroke="#6066c8" stroke-width="0.1">6</text>
<text transform="matrix(1 0.0006 0.0006 1 473.8 109.63)" font-size="3.9" fill="#cfcfcf" textLength="4.2" lengthAdjust="spacingAndGlyphs" stroke="#cfcfcf" stroke-width="0.1">21</text>
<text transform="matrix(1 0.0006 0.0006 1 613.6 109.76)" font-size="4.3" fill="#d8d8d8" textLength="11" lengthAdjust="spacingAndGlyphs" stroke="#d8d8d8" stroke-width="0.1">176%</text>
<circle cx="630" cy="107.8" r="1.55" fill="none" stroke="#d0d0d0" stroke-width="0.8"/><path d="M629 109 l-1.3 1.4" stroke="#d0d0d0" stroke-width="0.9" stroke-linecap="round"/>
<circle cx="674.6" cy="107.8" r="1.55" fill="none" stroke="#d0d0d0" stroke-width="0.8"/><path d="M673.6 109 l-1.3 1.4" stroke="#d0d0d0" stroke-width="0.9" stroke-linecap="round"/>
<rect x="634" y="108" width="37" height="0.6" rx="0.3" fill="#3c3c3c"/>
<rect x="648.8" y="107.1" width="6" height="2.4" rx="1" fill="#d6d6d6"/>
</g>
<rect x="240.1" y="113.8" width="440" height="307" fill="#1a1a1a"/>
<g id="viewer-photo" clip-path="url(#photoClip)">
<rect x="240.0" y="114.0" width="438.4" height="306.0" fill="#b09070"/>
<g id="photo-bg" filter="url(#bgBlur)">
<rect x="203.17" y="75.45" width="37.13" height="38.85" fill="#7a7088"/>
<rect x="239.7" y="75.45" width="37.13" height="38.85" fill="#7a7088"/>
<rect x="276.23" y="75.45" width="37.13" height="38.85" fill="#a8987a"/>
<rect x="312.77" y="75.45" width="37.13" height="38.85" fill="#b4a068"/>
<rect x="349.3" y="75.45" width="37.13" height="38.85" fill="#b8bc78"/>
<rect x="385.83" y="75.45" width="37.13" height="38.85" fill="#e0d082"/>
<rect x="422.37" y="75.45" width="37.13" height="38.85" fill="#d8d090"/>
<rect x="458.9" y="75.45" width="37.13" height="38.85" fill="#cecba6"/>
<rect x="495.43" y="75.45" width="37.13" height="38.85" fill="#cecba6"/>
<rect x="531.97" y="75.45" width="37.13" height="38.85" fill="#ecac88"/>
<rect x="568.5" y="75.45" width="37.13" height="38.85" fill="#f8a470"/>
<rect x="605.03" y="75.45" width="37.13" height="38.85" fill="#f8b068"/>
<rect x="641.57" y="75.45" width="37.13" height="38.85" fill="#ee7c5c"/>
<rect x="678.1" y="75.45" width="37.13" height="38.85" fill="#ee7c5c"/>
<rect x="203.17" y="113.7" width="37.13" height="38.85" fill="#7a7088"/>
<rect x="239.7" y="113.7" width="37.13" height="38.85" fill="#7a7088"/>
<rect x="276.23" y="113.7" width="37.13" height="38.85" fill="#a8987a"/>
<rect x="312.77" y="113.7" width="37.13" height="38.85" fill="#b4a068"/>
<rect x="349.3" y="113.7" width="37.13" height="38.85" fill="#b8bc78"/>
<rect x="385.83" y="113.7" width="37.13" height="38.85" fill="#e0d082"/>
<rect x="422.37" y="113.7" width="37.13" height="38.85" fill="#d8d090"/>
<rect x="458.9" y="113.7" width="37.13" height="38.85" fill="#cecba6"/>
<rect x="495.43" y="113.7" width="37.13" height="38.85" fill="#cecba6"/>
<rect x="531.97" y="113.7" width="37.13" height="38.85" fill="#ecac88"/>
<rect x="568.5" y="113.7" width="37.13" height="38.85" fill="#f8a470"/>
<rect x="605.03" y="113.7" width="37.13" height="38.85" fill="#f8b068"/>
<rect x="641.57" y="113.7" width="37.13" height="38.85" fill="#ee7c5c"/>
<rect x="678.1" y="113.7" width="37.13" height="38.85" fill="#ee7c5c"/>
<rect x="203.17" y="151.95" width="37.13" height="38.85" fill="#8e8068"/>
<rect x="239.7" y="151.95" width="37.13" height="38.85" fill="#8e8068"/>
<rect x="276.23" y="151.95" width="37.13" height="38.85" fill="#d4a050"/>
<rect x="312.77" y="151.95" width="37.13" height="38.85" fill="#f2a834"/>
<rect x="349.3" y="151.95" width="37.13" height="38.85" fill="#fbb044"/>
<rect x="385.83" y="151.95" width="37.13" height="38.85" fill="#faa83c"/>
<rect x="422.37" y="151.95" width="37.13" height="38.85" fill="#d0b468"/>
<rect x="458.9" y="151.95" width="37.13" height="38.85" fill="#b8cc90"/>
<rect x="495.43" y="151.95" width="37.13" height="38.85" fill="#b4cc90"/>
<rect x="531.97" y="151.95" width="37.13" height="38.85" fill="#d8bca0"/>
<rect x="568.5" y="151.95" width="37.13" height="38.85" fill="#f8ac70"/>
<rect x="605.03" y="151.95" width="37.13" height="38.85" fill="#f6b868"/>
<rect x="641.57" y="151.95" width="37.13" height="38.85" fill="#d65c54"/>
<rect x="678.1" y="151.95" width="37.13" height="38.85" fill="#d65c54"/>
<rect x="203.17" y="190.2" width="37.13" height="38.85" fill="#9a8058"/>
<rect x="239.7" y="190.2" width="37.13" height="38.85" fill="#9a8058"/>
<rect x="276.23" y="190.2" width="37.13" height="38.85" fill="#c8a040"/>
<rect x="312.77" y="190.2" width="37.13" height="38.85" fill="#d4a844"/>
<rect x="349.3" y="190.2" width="37.13" height="38.85" fill="#dcb662"/>
<rect x="385.83" y="190.2" width="37.13" height="38.85" fill="#a8c888"/>
<rect x="422.37" y="190.2" width="37.13" height="38.85" fill="#a4c488"/>
<rect x="458.9" y="190.2" width="37.13" height="38.85" fill="#acc88c"/>
<rect x="495.43" y="190.2" width="37.13" height="38.85" fill="#b0c888"/>
<rect x="531.97" y="190.2" width="37.13" height="38.85" fill="#ccbc90"/>
<rect x="568.5" y="190.2" width="37.13" height="38.85" fill="#f0b470"/>
<rect x="605.03" y="190.2" width="37.13" height="38.85" fill="#f4c67c"/>
<rect x="641.57" y="190.2" width="37.13" height="38.85" fill="#e47458"/>
<rect x="678.1" y="190.2" width="37.13" height="38.85" fill="#e47458"/>
<rect x="203.17" y="228.45" width="37.13" height="38.85" fill="#b07848"/>
<rect x="239.7" y="228.45" width="37.13" height="38.85" fill="#b07848"/>
<rect x="276.23" y="228.45" width="37.13" height="38.85" fill="#c0853f"/>
<rect x="312.77" y="228.45" width="37.13" height="38.85" fill="#c09850"/>
<rect x="349.3" y="228.45" width="37.13" height="38.85" fill="#a8c87c"/>
<rect x="385.83" y="228.45" width="37.13" height="38.85" fill="#a0c480"/>
<rect x="422.37" y="228.45" width="37.13" height="38.85" fill="#a0c07c"/>
<rect x="458.9" y="228.45" width="37.13" height="38.85" fill="#a8c07c"/>
<rect x="495.43" y="228.45" width="37.13" height="38.85" fill="#b0c07a"/>
<rect x="531.97" y="228.45" width="37.13" height="38.85" fill="#a4a680"/>
<rect x="568.5" y="228.45" width="37.13" height="38.85" fill="#d4a878"/>
<rect x="605.03" y="228.45" width="37.13" height="38.85" fill="#f0b86c"/>
<rect x="641.57" y="228.45" width="37.13" height="38.85" fill="#cc6450"/>
<rect x="678.1" y="228.45" width="37.13" height="38.85" fill="#cc6450"/>
<rect x="203.17" y="266.7" width="37.13" height="38.85" fill="#966040"/>
<rect x="239.7" y="266.7" width="37.13" height="38.85" fill="#966040"/>
<rect x="276.23" y="266.7" width="37.13" height="38.85" fill="#7a6e4c"/>
<rect x="312.77" y="266.7" width="37.13" height="38.85" fill="#8a985c"/>
<rect x="349.3" y="266.7" width="37.13" height="38.85" fill="#86a264"/>
<rect x="385.83" y="266.7" width="37.13" height="38.85" fill="#70a468"/>
<rect x="422.37" y="266.7" width="37.13" height="38.85" fill="#7ca468"/>
<rect x="458.9" y="266.7" width="37.13" height="38.85" fill="#8ea468"/>
<rect x="495.43" y="266.7" width="37.13" height="38.85" fill="#98a468"/>
<rect x="531.97" y="266.7" width="37.13" height="38.85" fill="#86767a"/>
<rect x="568.5" y="266.7" width="37.13" height="38.85" fill="#c8a87a"/>
<rect x="605.03" y="266.7" width="37.13" height="38.85" fill="#bc967e"/>
<rect x="641.57" y="266.7" width="37.13" height="38.85" fill="#e08058"/>
<rect x="678.1" y="266.7" width="37.13" height="38.85" fill="#e08058"/>
<rect x="203.17" y="304.95" width="37.13" height="38.85" fill="#b0582c"/>
<rect x="239.7" y="304.95" width="37.13" height="38.85" fill="#b0582c"/>
<rect x="276.23" y="304.95" width="37.13" height="38.85" fill="#a87842"/>
<rect x="312.77" y="304.95" width="37.13" height="38.85" fill="#6a9862"/>
<rect x="349.3" y="304.95" width="37.13" height="38.85" fill="#7ca05a"/>
<rect x="385.83" y="304.95" width="37.13" height="38.85" fill="#78a05c"/>
<rect x="422.37" y="304.95" width="37.13" height="38.85" fill="#809460"/>
<rect x="458.9" y="304.95" width="37.13" height="38.85" fill="#888862"/>
<rect x="495.43" y="304.95" width="37.13" height="38.85" fill="#8e7e62"/>
<rect x="531.97" y="304.95" width="37.13" height="38.85" fill="#806c68"/>
<rect x="568.5" y="304.95" width="37.13" height="38.85" fill="#b88c72"/>
<rect x="605.03" y="304.95" width="37.13" height="38.85" fill="#a07a78"/>
<rect x="641.57" y="304.95" width="37.13" height="38.85" fill="#a66468"/>
<rect x="678.1" y="304.95" width="37.13" height="38.85" fill="#a66468"/>
<rect x="203.17" y="343.2" width="37.13" height="38.85" fill="#a85030"/>
<rect x="239.7" y="343.2" width="37.13" height="38.85" fill="#a85030"/>
<rect x="276.23" y="343.2" width="37.13" height="38.85" fill="#b06034"/>
<rect x="312.77" y="343.2" width="37.13" height="38.85" fill="#6a6862"/>
<rect x="349.3" y="343.2" width="37.13" height="38.85" fill="#5e8858"/>
<rect x="385.83" y="343.2" width="37.13" height="38.85" fill="#668060"/>
<rect x="422.37" y="343.2" width="37.13" height="38.85" fill="#747864"/>
<rect x="458.9" y="343.2" width="37.13" height="38.85" fill="#827466"/>
<rect x="495.43" y="343.2" width="37.13" height="38.85" fill="#8a7468"/>
<rect x="531.97" y="343.2" width="37.13" height="38.85" fill="#a06850"/>
<rect x="568.5" y="343.2" width="37.13" height="38.85" fill="#886468"/>
<rect x="605.03" y="343.2" width="37.13" height="38.85" fill="#8a5c68"/>
<rect x="641.57" y="343.2" width="37.13" height="38.85" fill="#84546e"/>
<rect x="678.1" y="343.2" width="37.13" height="38.85" fill="#84546e"/>
<rect x="203.17" y="381.45" width="37.13" height="38.85" fill="#ae4428"/>
<rect x="239.7" y="381.45" width="37.13" height="38.85" fill="#ae4428"/>
<rect x="276.23" y="381.45" width="37.13" height="38.85" fill="#724a5c"/>
<rect x="312.77" y="381.45" width="37.13" height="38.85" fill="#5c4866"/>
<rect x="349.3" y="381.45" width="37.13" height="38.85" fill="#5a5068"/>
<rect x="385.83" y="381.45" width="37.13" height="38.85" fill="#605868"/>
<rect x="422.37" y="381.45" width="37.13" height="38.85" fill="#746060"/>
<rect x="458.9" y="381.45" width="37.13" height="38.85" fill="#886858"/>
<rect x="495.43" y="381.45" width="37.13" height="38.85" fill="#987058"/>
<rect x="531.97" y="381.45" width="37.13" height="38.85" fill="#a86a48"/>
<rect x="568.5" y="381.45" width="37.13" height="38.85" fill="#764a62"/>
<rect x="605.03" y="381.45" width="37.13" height="38.85" fill="#6c4468"/>
<rect x="641.57" y="381.45" width="37.13" height="38.85" fill="#743866"/>
<rect x="678.1" y="381.45" width="37.13" height="38.85" fill="#743866"/>
<rect x="203.17" y="419.7" width="37.13" height="38.85" fill="#ae4428"/>
<rect x="239.7" y="419.7" width="37.13" height="38.85" fill="#ae4428"/>
<rect x="276.23" y="419.7" width="37.13" height="38.85" fill="#724a5c"/>
<rect x="312.77" y="419.7" width="37.13" height="38.85" fill="#5c4866"/>
<rect x="349.3" y="419.7" width="37.13" height="38.85" fill="#5a5068"/>
<rect x="385.83" y="419.7" width="37.13" height="38.85" fill="#605868"/>
<rect x="422.37" y="419.7" width="37.13" height="38.85" fill="#746060"/>
<rect x="458.9" y="419.7" width="37.13" height="38.85" fill="#886858"/>
<rect x="495.43" y="419.7" width="37.13" height="38.85" fill="#987058"/>
<rect x="531.97" y="419.7" width="37.13" height="38.85" fill="#a86a48"/>
<rect x="568.5" y="419.7" width="37.13" height="38.85" fill="#764a62"/>
<rect x="605.03" y="419.7" width="37.13" height="38.85" fill="#6c4468"/>
<rect x="641.57" y="419.7" width="37.13" height="38.85" fill="#743866"/>
<rect x="678.1" y="419.7" width="37.13" height="38.85" fill="#743866"/>
</g>
<g id="photo-clouds" filter="url(#blobBlur)">
<ellipse cx="565" cy="298" rx="12" ry="14" fill="#7e7080" opacity="0.4"/>
<ellipse cx="612" cy="218" rx="14" ry="26" fill="#f6cc84" opacity="0.4"/>
<ellipse cx="355" cy="166" rx="30" ry="16" fill="#fbb040" opacity="0.5"/>
<ellipse cx="398" cy="168" rx="20" ry="20" fill="#faa83c" opacity="0.7"/>
<ellipse cx="412" cy="186" rx="10" ry="10" fill="#f6a238" opacity="0.55"/>
<ellipse cx="392" cy="232" rx="14" ry="20" fill="#a8cc8c" opacity="0.6"/>
<ellipse cx="500" cy="150" rx="18" ry="30" fill="#b8d4a0" opacity="0.35"/>
<ellipse cx="372" cy="345" rx="16" ry="30" fill="#64945c" opacity="0.5"/>
<ellipse cx="262" cy="384" rx="16" ry="12" fill="#a04a30" opacity="0.4"/>
</g>
<g id="photo-splatter">
<ellipse cx="351" cy="305" rx="5" ry="4.4" fill="#b8440e" opacity="0.85" transform="rotate(-25 351 305)"/>
<ellipse cx="350.2" cy="301.6" rx="5.4" ry="4.6" fill="#f27e22" opacity="1" transform="rotate(-25 350.2 301.6)"/>
<ellipse cx="349.4" cy="300.2" rx="3.2" ry="2.2" fill="#f89a38" opacity="0.8" transform="rotate(-25 349.4 300.2)"/>
<ellipse cx="335.4" cy="336.2" rx="3.6" ry="2.8" fill="#c04c12" opacity="0.8" transform="rotate(-20 335.4 336.2)"/>
<ellipse cx="334.9" cy="335" rx="3.8" ry="3" fill="#f07426" opacity="1" transform="rotate(-20 334.9 335)"/>
<ellipse cx="323.2" cy="353" rx="3.2" ry="2.7" fill="#f07c2a" opacity="0.95" transform="rotate(-30 323.2 353)"/>
<ellipse cx="316.6" cy="366.4" rx="2.8" ry="2.3" fill="#f08a30" opacity="0.95" transform="rotate(0 316.6 366.4)"/>
<ellipse cx="308.4" cy="386" rx="1.9" ry="5.2" fill="#f0902c" opacity="0.9" transform="rotate(8 308.4 386)"/>
<ellipse cx="295.4" cy="404.6" rx="1.6" ry="2.4" fill="#e88028" opacity="0.85" transform="rotate(10 295.4 404.6)"/>
<ellipse cx="293.8" cy="417.4" rx="1.7" ry="1.3" fill="#f08a28" opacity="0.85" transform="rotate(0 293.8 417.4)"/>
<ellipse cx="366.2" cy="259.6" rx="4.2" ry="3.4" fill="#f0801e" opacity="0.95" transform="rotate(35 366.2 259.6)"/>
<ellipse cx="367.4" cy="261.4" rx="3.2" ry="2.2" fill="#c4500e" opacity="0.6" transform="rotate(35 367.4 261.4)"/>
<ellipse cx="369.4" cy="267.4" rx="2.2" ry="1.5" fill="#e85018" opacity="0.9" transform="rotate(30 369.4 267.4)"/>
<ellipse cx="376" cy="251.8" rx="2" ry="1.5" fill="#f0882a" opacity="0.9" transform="rotate(0 376 251.8)"/>
<ellipse cx="362" cy="245.2" rx="1.8" ry="1.3" fill="#f0781e" opacity="0.9" transform="rotate(0 362 245.2)"/>
<ellipse cx="370.3" cy="282" rx="2" ry="1.5" fill="#e8501c" opacity="0.9" transform="rotate(0 370.3 282)"/>
<ellipse cx="354.8" cy="283.8" rx="1.6" ry="2.6" fill="#f06420" opacity="0.9" transform="rotate(0 354.8 283.8)"/>
<ellipse cx="367" cy="310.8" rx="1.8" ry="1.4" fill="#e85018" opacity="0.9" transform="rotate(0 367 310.8)"/>
<circle cx="364.4" cy="317" r="1.6" fill="#e85820" opacity="0.9"/>
<ellipse cx="332.5" cy="319.5" rx="1.8" ry="2.4" fill="#f06420" opacity="0.9" transform="rotate(0 332.5 319.5)"/>
<ellipse cx="356" cy="344.4" rx="3" ry="1.4" fill="#f08030" opacity="0.85" transform="rotate(-20 356 344.4)"/>
<ellipse cx="286.7" cy="282.1" rx="2.2" ry="1.4" fill="#f0441c" opacity="0.95" transform="rotate(0 286.7 282.1)"/>
<ellipse cx="302.6" cy="278.8" rx="2.4" ry="1.8" fill="#f0441c" opacity="0.95" transform="rotate(20 302.6 278.8)"/>
<circle cx="273.5" cy="223.3" r="1.9" fill="#f0401c" opacity="0.95"/>
<circle cx="243.2" cy="124" r="1.2" fill="#f0902c" opacity="0.85"/>
<circle cx="248" cy="122.4" r="0.8" fill="#e8743a" opacity="0.85"/>
<circle cx="263" cy="118.4" r="1" fill="#ec6a34" opacity="0.85"/>
<circle cx="291.4" cy="131" r="1" fill="#ec5a30" opacity="0.85"/>
<circle cx="299" cy="127" r="0.8" fill="#e86a3a" opacity="0.85"/>
<circle cx="246.4" cy="140" r="0.9" fill="#e8a040" opacity="0.85"/>
<circle cx="253" cy="141" r="0.9" fill="#e89038" opacity="0.85"/>
<circle cx="257" cy="141.4" r="0.7" fill="#e88038" opacity="0.85"/>
<circle cx="253" cy="147" r="0.8" fill="#e8703a" opacity="0.85"/>
<circle cx="291" cy="141.4" r="1.1" fill="#ec5a2c" opacity="0.85"/>
<circle cx="256.4" cy="157" r="0.9" fill="#e85a38" opacity="0.85"/>
<circle cx="273" cy="160.4" r="0.9" fill="#ec5a30" opacity="0.85"/>
<circle cx="277" cy="160" r="0.8" fill="#ec5a30" opacity="0.85"/>
<circle cx="295" cy="169" r="1.2" fill="#f0581c" opacity="0.85"/>
<circle cx="267" cy="170" r="0.9" fill="#e85838" opacity="0.85"/>
<circle cx="261" cy="177" r="1" fill="#ec4a2c" opacity="0.85"/>
<circle cx="282.4" cy="175.4" r="1.3" fill="#e85a1c" opacity="0.85"/>
<circle cx="260" cy="188.4" r="0.9" fill="#c84a2c" opacity="0.85"/>
<circle cx="243" cy="194" r="1" fill="#ec4024" opacity="0.85"/>
<circle cx="243" cy="213.4" r="0.9" fill="#ec4424" opacity="0.85"/>
<circle cx="290" cy="250" r="0.9" fill="#ec5424" opacity="0.85"/>
<circle cx="256" cy="225" r="0.8" fill="#ec5a30" opacity="0.85"/>
<circle cx="266" cy="205" r="0.8" fill="#e85a30" opacity="0.85"/>
<circle cx="275.5" cy="249" r="1.7" fill="#f03c1c" opacity="0.95"/>
<circle cx="254.5" cy="212.5" r="1.4" fill="#f0501c" opacity="0.9"/>
<circle cx="263.5" cy="240" r="1.3" fill="#f0441c" opacity="0.9"/>
<circle cx="566.6" cy="182" r="1.6" fill="#f0581c" opacity="0.9"/>
<circle cx="562.5" cy="184.5" r="1.4" fill="#f05a1c" opacity="0.9"/>
<circle cx="563.5" cy="187.8" r="1.1" fill="#f05a1c" opacity="0.9"/>
<circle cx="496.5" cy="183" r="1.3" fill="#f08820" opacity="0.9"/>
<ellipse cx="556" cy="197" rx="1.7" ry="0.8" fill="#f07c20" opacity="0.85" transform="rotate(0 556 197)"/>
<circle cx="545" cy="149" r="1.2" fill="#f0641c" opacity="0.9"/>
<circle cx="572" cy="147.5" r="1.3" fill="#f0741c" opacity="0.9"/>
<circle cx="577.6" cy="146" r="1.1" fill="#f0741c" opacity="0.9"/>
<circle cx="521.6" cy="159.6" r="1.1" fill="#f0641c" opacity="0.9"/>
<circle cx="510.5" cy="143" r="1" fill="#f07c1c" opacity="0.9"/>
<circle cx="264.48" cy="182.15" r="0.63" fill="#f0701c" opacity="0.7"/>
<circle cx="270.65" cy="160.48" r="0.59" fill="#f07a24" opacity="0.7"/>
<circle cx="269.28" cy="179.82" r="0.51" fill="#ee5a1e" opacity="0.7"/>
<circle cx="280.17" cy="183.47" r="0.71" fill="#f0701c" opacity="0.7"/>
<circle cx="286.36" cy="159.13" r="0.59" fill="#f0701c" opacity="0.7"/>
<circle cx="255.77" cy="158.88" r="0.79" fill="#f0701c" opacity="0.7"/>
<circle cx="261.11" cy="165.57" r="0.51" fill="#f07a24" opacity="0.7"/>
<circle cx="276.72" cy="183.76" r="0.71" fill="#ee5a1e" opacity="0.7"/>
<circle cx="282.27" cy="188.64" r="0.39" fill="#f0701c" opacity="0.7"/>
<circle cx="263.27" cy="167.47" r="0.33" fill="#ee5a1e" opacity="0.7"/>
<circle cx="251.07" cy="170.66" r="0.69" fill="#e8481c" opacity="0.7"/>
<circle cx="255.02" cy="156.64" r="0.45" fill="#ee5a1e" opacity="0.7"/>
<circle cx="264.76" cy="153.14" r="0.59" fill="#f07a24" opacity="0.7"/>
<circle cx="255.39" cy="170.67" r="0.52" fill="#f07a24" opacity="0.7"/>
<circle cx="266.97" cy="229.14" r="0.69" fill="#f58a28" opacity="0.85"/>
<circle cx="268.69" cy="243.01" r="0.43" fill="#f0701c" opacity="0.85"/>
<circle cx="263.19" cy="212.14" r="1.01" fill="#f58a28" opacity="0.85"/>
<circle cx="257.02" cy="240.77" r="0.75" fill="#e8481c" opacity="0.85"/>
<circle cx="266.03" cy="232.55" r="0.59" fill="#f0701c" opacity="0.85"/>
<circle cx="276.43" cy="237.95" r="0.85" fill="#e8481c" opacity="0.85"/>
<circle cx="259.87" cy="243.26" r="0.87" fill="#f0701c" opacity="0.85"/>
<circle cx="270.73" cy="225.3" r="0.83" fill="#e8481c" opacity="0.85"/>
<circle cx="277.94" cy="238.51" r="0.49" fill="#ee5a1e" opacity="0.85"/>
<circle cx="244.13" cy="248.35" r="0.75" fill="#ee5a1e" opacity="0.85"/>
<circle cx="250.01" cy="235.45" r="1.02" fill="#e8481c" opacity="0.85"/>
<circle cx="267.3" cy="221.62" r="0.69" fill="#f58a28" opacity="0.85"/>
<circle cx="257.99" cy="217.73" r="0.56" fill="#f0701c" opacity="0.85"/>
<circle cx="265.25" cy="238.94" r="0.56" fill="#e8481c" opacity="0.85"/>
<circle cx="374.71" cy="253.15" r="0.63" fill="#ee5a1e" opacity="0.85"/>
<circle cx="364.67" cy="262.1" r="0.85" fill="#ee5a1e" opacity="0.85"/>
<circle cx="368.15" cy="248.19" r="0.89" fill="#f0701c" opacity="0.85"/>
<circle cx="354.95" cy="262.76" r="1.16" fill="#f07a24" opacity="0.85"/>
<circle cx="365.11" cy="263.53" r="0.48" fill="#e8481c" opacity="0.85"/>
<circle cx="375.02" cy="259.25" r="0.57" fill="#ee5a1e" opacity="0.85"/>
<circle cx="381.14" cy="265.55" r="0.48" fill="#f07a24" opacity="0.85"/>
<circle cx="374.35" cy="261.29" r="0.69" fill="#f0701c" opacity="0.85"/>
<circle cx="377.4" cy="260.55" r="0.7" fill="#f58a28" opacity="0.85"/>
<circle cx="383.42" cy="254.72" r="0.78" fill="#f0701c" opacity="0.85"/>
<circle cx="388.08" cy="235.56" r="0.77" fill="#e8481c" opacity="0.85"/>
<circle cx="370.15" cy="262.52" r="1" fill="#f58a28" opacity="0.85"/>
<circle cx="358.69" cy="259.8" r="0.81" fill="#ee5a1e" opacity="0.85"/>
<circle cx="382.22" cy="254.75" r="0.52" fill="#f07a24" opacity="0.85"/>
<circle cx="384.65" cy="250.43" r="0.64" fill="#f0701c" opacity="0.85"/>
<circle cx="369.74" cy="251.58" r="0.69" fill="#ee5a1e" opacity="0.85"/>
<circle cx="368.17" cy="262.89" r="0.83" fill="#f07a24" opacity="0.85"/>
<circle cx="369.02" cy="263.45" r="1.05" fill="#ee5a1e" opacity="0.85"/>
<circle cx="377.58" cy="242.83" r="0.99" fill="#ee5a1e" opacity="0.85"/>
<circle cx="375.16" cy="267.69" r="0.98" fill="#f0701c" opacity="0.85"/>
<circle cx="374.47" cy="248.42" r="0.55" fill="#f07a24" opacity="0.85"/>
<circle cx="381.17" cy="255.43" r="1.15" fill="#f58a28" opacity="0.85"/>
<circle cx="380" cy="255.67" r="0.58" fill="#ee5a1e" opacity="0.85"/>
<circle cx="364.2" cy="259.48" r="0.79" fill="#f07a24" opacity="0.85"/>
<circle cx="377.38" cy="249.57" r="0.92" fill="#f0701c" opacity="0.85"/>
<circle cx="374.24" cy="254.19" r="0.71" fill="#ee5a1e" opacity="0.85"/>
<circle cx="345.79" cy="300.97" r="1.11" fill="#f58a28" opacity="0.85"/>
<circle cx="372.67" cy="314.1" r="1.05" fill="#e8481c" opacity="0.85"/>
<circle cx="332.28" cy="315.82" r="1.05" fill="#ee5a1e" opacity="0.85"/>
<circle cx="354.36" cy="299.88" r="0.93" fill="#e8481c" opacity="0.85"/>
<circle cx="353.95" cy="294.07" r="1.14" fill="#e8481c" opacity="0.85"/>
<circle cx="346.89" cy="291.27" r="0.89" fill="#ee5a1e" opacity="0.85"/>
<circle cx="369.76" cy="302.7" r="1.05" fill="#f0701c" opacity="0.85"/>
<circle cx="329.03" cy="295.64" r="0.79" fill="#ee5a1e" opacity="0.85"/>
<circle cx="355.17" cy="293.12" r="0.63" fill="#f58a28" opacity="0.85"/>
<circle cx="335.01" cy="299.86" r="0.69" fill="#f07a24" opacity="0.85"/>
<circle cx="347.37" cy="302.91" r="1.22" fill="#f58a28" opacity="0.85"/>
<circle cx="363.8" cy="290.06" r="1.13" fill="#f07a24" opacity="0.85"/>
<circle cx="332.37" cy="312.03" r="0.85" fill="#f07a24" opacity="0.85"/>
<circle cx="358.91" cy="310.97" r="1.19" fill="#ee5a1e" opacity="0.85"/>
<circle cx="338.57" cy="287.73" r="0.53" fill="#ee5a1e" opacity="0.85"/>
<circle cx="336.15" cy="303" r="0.9" fill="#f58a28" opacity="0.85"/>
<circle cx="346.93" cy="287.39" r="0.83" fill="#f0701c" opacity="0.85"/>
<circle cx="354.54" cy="297.42" r="0.57" fill="#f0701c" opacity="0.85"/>
<circle cx="353.66" cy="286.74" r="0.91" fill="#f0701c" opacity="0.85"/>
<circle cx="339.1" cy="305.41" r="0.85" fill="#f07a24" opacity="0.85"/>
<circle cx="354.52" cy="308.61" r="0.86" fill="#e8481c" opacity="0.85"/>
<circle cx="344.46" cy="299.59" r="0.87" fill="#f58a28" opacity="0.85"/>
<circle cx="370.69" cy="288.91" r="0.58" fill="#e8481c" opacity="0.85"/>
<circle cx="355.32" cy="304.35" r="0.8" fill="#f0701c" opacity="0.85"/>
<circle cx="346.97" cy="289.53" r="0.59" fill="#f58a28" opacity="0.85"/>
<circle cx="356.51" cy="276.56" r="0.54" fill="#f58a28" opacity="0.85"/>
<circle cx="364.9" cy="318.23" r="1.27" fill="#ee5a1e" opacity="0.85"/>
<circle cx="351.91" cy="295" r="1.2" fill="#ee5a1e" opacity="0.85"/>
<circle cx="370.86" cy="298.65" r="0.55" fill="#e8481c" opacity="0.85"/>
<circle cx="362.16" cy="299.57" r="0.78" fill="#f58a28" opacity="0.85"/>
<circle cx="322.16" cy="365" r="0.42" fill="#f07a24" opacity="0.85"/>
<circle cx="314.82" cy="350.5" r="0.71" fill="#f07a24" opacity="0.85"/>
<circle cx="320.54" cy="333.43" r="0.45" fill="#ee5a1e" opacity="0.85"/>
<circle cx="332.05" cy="343.86" r="0.61" fill="#f0701c" opacity="0.85"/>
<circle cx="332.6" cy="340.15" r="1" fill="#e8481c" opacity="0.85"/>
<circle cx="335.69" cy="328.27" r="1.16" fill="#e8481c" opacity="0.85"/>
<circle cx="339.6" cy="369.88" r="0.86" fill="#f58a28" opacity="0.85"/>
<circle cx="330.55" cy="347.52" r="0.95" fill="#e8481c" opacity="0.85"/>
<circle cx="333.48" cy="338.35" r="0.41" fill="#f0701c" opacity="0.85"/>
<circle cx="329.17" cy="339.55" r="1.08" fill="#f0701c" opacity="0.85"/>
<circle cx="327.6" cy="351.98" r="0.41" fill="#f07a24" opacity="0.85"/>
<circle cx="311.09" cy="360.1" r="0.9" fill="#f0701c" opacity="0.85"/>
<circle cx="321.63" cy="343.29" r="0.49" fill="#ee5a1e" opacity="0.85"/>
<circle cx="327.59" cy="353.67" r="1.15" fill="#f58a28" opacity="0.85"/>
<circle cx="322.17" cy="343.19" r="0.76" fill="#ee5a1e" opacity="0.85"/>
<circle cx="325.97" cy="369.61" r="1.2" fill="#f0701c" opacity="0.85"/>
<circle cx="342.16" cy="347.15" r="0.84" fill="#ee5a1e" opacity="0.85"/>
<circle cx="321.46" cy="344.08" r="0.76" fill="#e8481c" opacity="0.85"/>
<circle cx="321.91" cy="330.62" r="1.11" fill="#f07a24" opacity="0.85"/>
<circle cx="325.84" cy="353.95" r="0.58" fill="#ee5a1e" opacity="0.85"/>
<circle cx="334.77" cy="326.28" r="0.91" fill="#e8481c" opacity="0.85"/>
<circle cx="352.73" cy="342.42" r="1.07" fill="#f0701c" opacity="0.85"/>
<circle cx="340.98" cy="354.71" r="0.6" fill="#ee5a1e" opacity="0.85"/>
<circle cx="340.17" cy="351.94" r="0.7" fill="#f07a24" opacity="0.85"/>
<circle cx="324.59" cy="335.18" r="0.59" fill="#f58a28" opacity="0.85"/>
<circle cx="333.38" cy="347.47" r="0.62" fill="#f0701c" opacity="0.85"/>
<circle cx="326.14" cy="380.01" r="1.18" fill="#f07a24" opacity="0.85"/>
<circle cx="326.97" cy="348.26" r="1.11" fill="#ee5a1e" opacity="0.85"/>
<circle cx="327.75" cy="345.5" r="0.71" fill="#e8481c" opacity="0.85"/>
<circle cx="325.69" cy="364.76" r="0.6" fill="#f0701c" opacity="0.85"/>
<circle cx="341.57" cy="358.69" r="0.52" fill="#f07a24" opacity="0.85"/>
<circle cx="329.8" cy="345.76" r="0.64" fill="#ee5a1e" opacity="0.85"/>
<circle cx="346.97" cy="362.5" r="1.08" fill="#ee5a1e" opacity="0.85"/>
<circle cx="320.38" cy="326.76" r="1.1" fill="#e8481c" opacity="0.85"/>
<circle cx="329.25" cy="323.13" r="0.8" fill="#f58a28" opacity="0.85"/>
<circle cx="325.97" cy="325.52" r="0.44" fill="#f07a24" opacity="0.85"/>
<circle cx="318.08" cy="328.95" r="1.05" fill="#ee5a1e" opacity="0.85"/>
<circle cx="340.35" cy="332.67" r="0.85" fill="#f0701c" opacity="0.85"/>
<circle cx="333.35" cy="328.85" r="1.11" fill="#ee5a1e" opacity="0.85"/>
<circle cx="330.2" cy="347.05" r="0.91" fill="#f0701c" opacity="0.85"/>
<circle cx="321.15" cy="355.55" r="0.44" fill="#f0701c" opacity="0.85"/>
<circle cx="318.72" cy="330.2" r="0.79" fill="#f0701c" opacity="0.85"/>
<circle cx="324.79" cy="346.4" r="1.15" fill="#f07a24" opacity="0.85"/>
<circle cx="336.96" cy="354.17" r="1" fill="#e8481c" opacity="0.85"/>
<circle cx="317.97" cy="375.93" r="0.46" fill="#ee5a1e" opacity="0.8"/>
<circle cx="318.98" cy="386.38" r="0.58" fill="#e8481c" opacity="0.8"/>
<circle cx="328.95" cy="382.19" r="0.47" fill="#f0701c" opacity="0.8"/>
<circle cx="312.01" cy="362.38" r="0.35" fill="#ee5a1e" opacity="0.8"/>
<circle cx="313.99" cy="384.65" r="0.72" fill="#f07a24" opacity="0.8"/>
<circle cx="317.19" cy="371.35" r="0.34" fill="#f58a28" opacity="0.8"/>
<circle cx="320.54" cy="371.21" r="0.43" fill="#e8481c" opacity="0.8"/>
<circle cx="316.28" cy="383.66" r="0.58" fill="#e8481c" opacity="0.8"/>
<circle cx="319.92" cy="340.54" r="0.63" fill="#f58a28" opacity="0.8"/>
<circle cx="331.07" cy="368.79" r="0.31" fill="#e8481c" opacity="0.8"/>
<circle cx="323.93" cy="377.49" r="0.9" fill="#f58a28" opacity="0.8"/>
<circle cx="308.5" cy="386.54" r="0.86" fill="#f0701c" opacity="0.8"/>
<circle cx="315.29" cy="369.29" r="0.61" fill="#f58a28" opacity="0.8"/>
<circle cx="325.01" cy="385.71" r="0.61" fill="#f0701c" opacity="0.8"/>
<circle cx="316.82" cy="365.05" r="0.84" fill="#e8481c" opacity="0.8"/>
<circle cx="315.4" cy="375.63" r="0.87" fill="#e8481c" opacity="0.8"/>
<circle cx="310.49" cy="381.02" r="0.55" fill="#e8481c" opacity="0.8"/>
<circle cx="313.65" cy="389.53" r="0.3" fill="#f58a28" opacity="0.8"/>
<circle cx="319.51" cy="367.71" r="0.86" fill="#f0701c" opacity="0.8"/>
<circle cx="321.79" cy="367.2" r="0.52" fill="#e8481c" opacity="0.8"/>
<circle cx="309.24" cy="384.86" r="0.35" fill="#e8481c" opacity="0.8"/>
<circle cx="318.39" cy="352.39" r="0.47" fill="#f0701c" opacity="0.8"/>
<circle cx="320.34" cy="364.93" r="0.86" fill="#ee5a1e" opacity="0.8"/>
<circle cx="323.92" cy="370.06" r="0.49" fill="#f58a28" opacity="0.8"/>
<circle cx="306.16" cy="384.69" r="0.42" fill="#e8481c" opacity="0.8"/>
<circle cx="315.17" cy="382.7" r="0.78" fill="#f0701c" opacity="0.8"/>
<circle cx="312.73" cy="399.97" r="0.72" fill="#ee5a1e" opacity="0.8"/>
<circle cx="302.47" cy="388.53" r="0.43" fill="#f07a24" opacity="0.8"/>
<circle cx="308.94" cy="403.11" r="0.64" fill="#f58a28" opacity="0.8"/>
<circle cx="304.7" cy="411.37" r="0.86" fill="#e8481c" opacity="0.8"/>
<circle cx="302.64" cy="387.97" r="0.79" fill="#e8481c" opacity="0.8"/>
<circle cx="310.24" cy="404.81" r="0.45" fill="#f07a24" opacity="0.8"/>
<circle cx="309.87" cy="388.47" r="0.55" fill="#f58a28" opacity="0.8"/>
<circle cx="310.47" cy="394.76" r="0.5" fill="#ee5a1e" opacity="0.8"/>
<circle cx="305.12" cy="401.19" r="0.79" fill="#f58a28" opacity="0.8"/>
<circle cx="305.26" cy="402.71" r="0.8" fill="#f0701c" opacity="0.8"/>
<circle cx="304.99" cy="384.68" r="0.69" fill="#f07a24" opacity="0.8"/>
<circle cx="305.99" cy="402.69" r="0.93" fill="#e8481c" opacity="0.8"/>
<circle cx="510.42" cy="228.07" r="0.36" fill="#f07a24" opacity="0.6"/>
<circle cx="483.07" cy="162.74" r="0.72" fill="#f0701c" opacity="0.6"/>
<circle cx="517.88" cy="186.86" r="0.5" fill="#e8481c" opacity="0.6"/>
<circle cx="503.28" cy="178.08" r="0.71" fill="#f0701c" opacity="0.6"/>
<circle cx="535.59" cy="186.98" r="0.68" fill="#e8481c" opacity="0.6"/>
<circle cx="544.17" cy="164.83" r="0.34" fill="#f07a24" opacity="0.6"/>
<circle cx="555" cy="122.51" r="0.42" fill="#f0701c" opacity="0.6"/>
<circle cx="522" cy="182.75" r="0.79" fill="#f0701c" opacity="0.6"/>
<circle cx="551.72" cy="157.07" r="0.62" fill="#e8481c" opacity="0.6"/>
<circle cx="551.68" cy="189.84" r="0.3" fill="#ee5a1e" opacity="0.6"/>
<circle cx="525.22" cy="220.26" r="0.62" fill="#f58a28" opacity="0.6"/>
<circle cx="549" cy="162.62" r="0.56" fill="#e8481c" opacity="0.6"/>
<circle cx="516.71" cy="159.59" r="0.34" fill="#f07a24" opacity="0.6"/>
<circle cx="533" cy="164.9" r="0.43" fill="#f07a24" opacity="0.6"/>
<circle cx="546.39" cy="170.2" r="0.8" fill="#f58a28" opacity="0.6"/>
<circle cx="549.55" cy="161.74" r="0.74" fill="#e8481c" opacity="0.6"/>
<circle cx="493.62" cy="165.35" r="0.31" fill="#e8481c" opacity="0.6"/>
<circle cx="514.88" cy="151.49" r="0.31" fill="#e8481c" opacity="0.6"/>
<circle cx="542.99" cy="148.5" r="0.34" fill="#ee5a1e" opacity="0.6"/>
<circle cx="495.99" cy="125.52" r="0.41" fill="#f0701c" opacity="0.6"/>
<circle cx="508.71" cy="136.24" r="0.48" fill="#e8481c" opacity="0.6"/>
<circle cx="532.16" cy="208.07" r="0.67" fill="#f07a24" opacity="0.6"/>
<circle cx="542.67" cy="180.82" r="0.4" fill="#ee5a1e" opacity="0.6"/>
<circle cx="521.81" cy="185.8" r="0.68" fill="#f58a28" opacity="0.6"/>
<circle cx="543.01" cy="189.9" r="0.61" fill="#ee5a1e" opacity="0.6"/>
<circle cx="473.53" cy="174.63" r="0.33" fill="#f07a24" opacity="0.6"/>
<circle cx="532.88" cy="187.9" r="0.41" fill="#f07a24" opacity="0.6"/>
<circle cx="524.36" cy="175.71" r="0.33" fill="#e8481c" opacity="0.6"/>
<circle cx="488.13" cy="181.05" r="0.46" fill="#f0701c" opacity="0.6"/>
<circle cx="569.21" cy="169.19" r="0.46" fill="#ee5a1e" opacity="0.6"/>
<circle cx="505.09" cy="147.55" r="0.53" fill="#f58a28" opacity="0.6"/>
<circle cx="509.38" cy="151.15" r="0.49" fill="#f58a28" opacity="0.6"/>
<circle cx="510.45" cy="173.82" r="0.34" fill="#f0701c" opacity="0.6"/>
<circle cx="488.44" cy="215.11" r="0.36" fill="#ee5a1e" opacity="0.6"/>
<circle cx="493.47" cy="196.33" r="0.45" fill="#e8481c" opacity="0.6"/>
<circle cx="548.29" cy="188.43" r="0.4" fill="#f07a24" opacity="0.6"/>
<circle cx="532.17" cy="162.86" r="0.48" fill="#e8481c" opacity="0.6"/>
<circle cx="541.46" cy="174.38" r="0.71" fill="#e8481c" opacity="0.6"/>
<circle cx="525.48" cy="171.51" r="0.33" fill="#f0701c" opacity="0.6"/>
<circle cx="518.45" cy="207.28" r="0.75" fill="#f58a28" opacity="0.6"/>
<circle cx="507.49" cy="185.41" r="0.78" fill="#f0701c" opacity="0.6"/>
<circle cx="517.42" cy="205.63" r="0.46" fill="#f58a28" opacity="0.6"/>
<circle cx="510.03" cy="204.4" r="0.6" fill="#f0701c" opacity="0.6"/>
<circle cx="535.33" cy="172.49" r="0.54" fill="#e8481c" opacity="0.6"/>
<circle cx="540.13" cy="163.65" r="0.43" fill="#e8481c" opacity="0.6"/>
<circle cx="524.49" cy="158.97" r="0.55" fill="#f0701c" opacity="0.6"/>
<circle cx="531.29" cy="135.14" r="0.71" fill="#ee5a1e" opacity="0.6"/>
<circle cx="505.2" cy="157.49" r="0.46" fill="#f58a28" opacity="0.6"/>
<circle cx="526.03" cy="140.4" r="0.56" fill="#e8481c" opacity="0.6"/>
<circle cx="520.29" cy="153.04" r="0.33" fill="#f0701c" opacity="0.6"/>
<circle cx="493.52" cy="173.24" r="0.38" fill="#e8481c" opacity="0.6"/>
<circle cx="566.93" cy="125.34" r="0.43" fill="#f0701c" opacity="0.6"/>
<circle cx="525.75" cy="192.72" r="0.79" fill="#e8481c" opacity="0.6"/>
<circle cx="525.27" cy="180.64" r="0.53" fill="#ee5a1e" opacity="0.6"/>
<circle cx="519.48" cy="126.41" r="0.63" fill="#f0701c" opacity="0.6"/>
<circle cx="523.29" cy="151.56" r="0.44" fill="#f58a28" opacity="0.6"/>
<circle cx="495.72" cy="196.37" r="0.4" fill="#ee5a1e" opacity="0.6"/>
<circle cx="526.12" cy="185.16" r="0.44" fill="#f07a24" opacity="0.6"/>
<circle cx="522.94" cy="177.62" r="0.43" fill="#ee5a1e" opacity="0.6"/>
<circle cx="504.6" cy="169.25" r="0.7" fill="#e8481c" opacity="0.6"/>
<circle cx="529.86" cy="169.41" r="0.54" fill="#ee5a1e" opacity="0.6"/>
<circle cx="545.38" cy="127.97" r="0.32" fill="#f58a28" opacity="0.6"/>
<circle cx="520.73" cy="177.19" r="0.6" fill="#f07a24" opacity="0.6"/>
<circle cx="522.89" cy="178.35" r="0.56" fill="#ee5a1e" opacity="0.6"/>
<circle cx="504.35" cy="175.49" r="0.69" fill="#f0701c" opacity="0.6"/>
<circle cx="542.52" cy="188.69" r="0.61" fill="#ee5a1e" opacity="0.6"/>
<circle cx="538.84" cy="174.78" r="0.32" fill="#f58a28" opacity="0.6"/>
<circle cx="553.51" cy="178.69" r="0.76" fill="#f0701c" opacity="0.6"/>
<circle cx="529.13" cy="149.05" r="0.49" fill="#f07a24" opacity="0.6"/>
<circle cx="514.54" cy="184.03" r="0.7" fill="#f07a24" opacity="0.6"/>
<circle cx="498.35" cy="172.38" r="0.7" fill="#f07a24" opacity="0.6"/>
<circle cx="534.82" cy="192.95" r="0.63" fill="#e8481c" opacity="0.6"/>
<circle cx="512.66" cy="148.24" r="0.44" fill="#f58a28" opacity="0.6"/>
<circle cx="514" cy="173.61" r="0.67" fill="#f58a28" opacity="0.6"/>
<circle cx="516.51" cy="172.22" r="0.68" fill="#f58a28" opacity="0.6"/>
<circle cx="506.98" cy="152.35" r="0.5" fill="#f0701c" opacity="0.6"/>
<circle cx="508.65" cy="175.28" r="0.36" fill="#f0701c" opacity="0.6"/>
<circle cx="483.42" cy="195.89" r="0.53" fill="#ee5a1e" opacity="0.6"/>
<circle cx="524.74" cy="175.34" r="0.37" fill="#e8481c" opacity="0.6"/>
<circle cx="545.13" cy="186.66" r="0.49" fill="#f07a24" opacity="0.6"/>
<circle cx="529.28" cy="188.34" r="0.38" fill="#ee5a1e" opacity="0.6"/>
<circle cx="529.1" cy="165.13" r="0.55" fill="#ee5a1e" opacity="0.6"/>
<circle cx="507.1" cy="210.64" r="0.32" fill="#e8481c" opacity="0.6"/>
<circle cx="508.54" cy="198.28" r="0.62" fill="#f0701c" opacity="0.6"/>
<circle cx="544.38" cy="152.27" r="0.71" fill="#ee5a1e" opacity="0.6"/>
<circle cx="493.37" cy="135.78" r="0.61" fill="#f07a24" opacity="0.6"/>
<circle cx="542.73" cy="135.22" r="0.39" fill="#ee5a1e" opacity="0.6"/>
<circle cx="568.48" cy="183.77" r="0.38" fill="#f58a28" opacity="0.6"/>
<circle cx="531.46" cy="181.84" r="0.66" fill="#ee5a1e" opacity="0.6"/>
<circle cx="546.41" cy="177.39" r="0.68" fill="#f0701c" opacity="0.6"/>
<circle cx="510.72" cy="152.67" r="0.49" fill="#e8481c" opacity="0.6"/>
<circle cx="491.62" cy="160.22" r="0.45" fill="#e8481c" opacity="0.6"/>
<circle cx="514.24" cy="185.91" r="0.49" fill="#f58a28" opacity="0.6"/>
<circle cx="498.44" cy="177.93" r="0.31" fill="#f07a24" opacity="0.6"/>
<circle cx="543.69" cy="167.81" r="0.52" fill="#f07a24" opacity="0.6"/>
<circle cx="524.41" cy="145.53" r="0.39" fill="#e8481c" opacity="0.6"/>
<circle cx="513.58" cy="174.92" r="0.48" fill="#f58a28" opacity="0.6"/>
<circle cx="539.25" cy="183.24" r="0.56" fill="#f0701c" opacity="0.6"/>
<circle cx="530.86" cy="173" r="0.76" fill="#f58a28" opacity="0.6"/>
<circle cx="524.39" cy="143.47" r="0.33" fill="#f07a24" opacity="0.6"/>
<circle cx="544.41" cy="149.92" r="0.69" fill="#f0701c" opacity="0.6"/>
<circle cx="515.62" cy="128.93" r="0.4" fill="#e8481c" opacity="0.6"/>
<circle cx="510.85" cy="209.91" r="0.7" fill="#ee5a1e" opacity="0.6"/>
<circle cx="538.11" cy="178.37" r="0.68" fill="#ee5a1e" opacity="0.6"/>
<circle cx="506.89" cy="197.75" r="0.75" fill="#e8481c" opacity="0.6"/>
<circle cx="535.56" cy="190.85" r="0.76" fill="#ee5a1e" opacity="0.6"/>
<circle cx="495.37" cy="153.01" r="0.42" fill="#f58a28" opacity="0.6"/>
<circle cx="533.11" cy="173.27" r="0.38" fill="#f58a28" opacity="0.6"/>
<circle cx="500.69" cy="126.78" r="0.38" fill="#f58a28" opacity="0.6"/>
<circle cx="510.38" cy="162.21" r="0.55" fill="#f58a28" opacity="0.55"/>
<circle cx="512.08" cy="146.52" r="0.51" fill="#f0701c" opacity="0.55"/>
<circle cx="499.82" cy="168.58" r="0.64" fill="#f58a28" opacity="0.55"/>
<circle cx="496.82" cy="195.58" r="0.53" fill="#f58a28" opacity="0.55"/>
<circle cx="497.75" cy="155.4" r="0.39" fill="#f07a24" opacity="0.55"/>
<circle cx="499.86" cy="145.28" r="0.63" fill="#f58a28" opacity="0.55"/>
<circle cx="489.22" cy="186.26" r="0.65" fill="#f58a28" opacity="0.55"/>
<circle cx="498.02" cy="125.27" r="0.39" fill="#f58a28" opacity="0.55"/>
<circle cx="491.07" cy="139.37" r="0.51" fill="#f0701c" opacity="0.55"/>
<circle cx="505.45" cy="157.94" r="0.56" fill="#f0701c" opacity="0.55"/>
<circle cx="513.72" cy="156.51" r="0.42" fill="#f07a24" opacity="0.55"/>
<circle cx="495" cy="158.36" r="0.53" fill="#f07a24" opacity="0.55"/>
<circle cx="507.17" cy="160.67" r="0.63" fill="#ee5a1e" opacity="0.55"/>
<circle cx="517.5" cy="176.39" r="0.4" fill="#ee5a1e" opacity="0.55"/>
<circle cx="496.11" cy="151.65" r="0.36" fill="#f58a28" opacity="0.55"/>
<circle cx="492.81" cy="156.79" r="0.3" fill="#f07a24" opacity="0.55"/>
<circle cx="511.81" cy="137.41" r="0.53" fill="#f07a24" opacity="0.55"/>
<circle cx="516.89" cy="140.62" r="0.4" fill="#f0701c" opacity="0.55"/>
<circle cx="513.33" cy="155.04" r="0.46" fill="#ee5a1e" opacity="0.55"/>
<circle cx="513.39" cy="177.82" r="0.34" fill="#f07a24" opacity="0.55"/>
<circle cx="474.6" cy="138.78" r="0.36" fill="#ee5a1e" opacity="0.55"/>
<circle cx="483.97" cy="147.54" r="0.56" fill="#e8481c" opacity="0.55"/>
<circle cx="502.7" cy="141.43" r="0.42" fill="#f58a28" opacity="0.55"/>
<circle cx="474.68" cy="115.83" r="0.59" fill="#e8481c" opacity="0.55"/>
<circle cx="499.73" cy="148.35" r="0.64" fill="#e8481c" opacity="0.55"/>
<circle cx="514.37" cy="160.61" r="0.37" fill="#f0701c" opacity="0.55"/>
<circle cx="498.84" cy="171.5" r="0.35" fill="#f58a28" opacity="0.55"/>
<circle cx="497.89" cy="138.54" r="0.52" fill="#e8481c" opacity="0.55"/>
<circle cx="490.13" cy="119.2" r="0.69" fill="#f58a28" opacity="0.55"/>
<circle cx="481.7" cy="119.75" r="0.39" fill="#f07a24" opacity="0.55"/>
<circle cx="508.7" cy="151.11" r="0.39" fill="#ee5a1e" opacity="0.55"/>
<circle cx="517.52" cy="141.54" r="0.43" fill="#e8481c" opacity="0.55"/>
<circle cx="496.06" cy="159.77" r="0.66" fill="#f07a24" opacity="0.55"/>
<circle cx="478.87" cy="155.47" r="0.58" fill="#f0701c" opacity="0.55"/>
<circle cx="483.32" cy="159.26" r="0.53" fill="#f58a28" opacity="0.55"/>
<circle cx="502.73" cy="135.5" r="0.53" fill="#f07a24" opacity="0.55"/>
<circle cx="505.33" cy="145.54" r="0.31" fill="#f0701c" opacity="0.55"/>
<circle cx="495.18" cy="143.82" r="0.69" fill="#f0701c" opacity="0.55"/>
<circle cx="506.03" cy="151.58" r="0.56" fill="#f0701c" opacity="0.55"/>
<circle cx="493.99" cy="126.84" r="0.33" fill="#f07a24" opacity="0.55"/>
<circle cx="552.43" cy="156.69" r="0.97" fill="#f07a24" opacity="0.85"/>
<circle cx="554.51" cy="162.09" r="0.91" fill="#e8481c" opacity="0.85"/>
<circle cx="556.64" cy="170.29" r="0.42" fill="#f0701c" opacity="0.85"/>
<circle cx="570.28" cy="156.38" r="0.84" fill="#f0701c" opacity="0.85"/>
<circle cx="557.62" cy="149.26" r="0.54" fill="#f0701c" opacity="0.85"/>
<circle cx="562.42" cy="181.4" r="0.77" fill="#f58a28" opacity="0.85"/>
<circle cx="548.13" cy="176.91" r="0.36" fill="#f58a28" opacity="0.85"/>
<circle cx="554.49" cy="163.33" r="0.84" fill="#f58a28" opacity="0.85"/>
<circle cx="553.43" cy="148.16" r="0.66" fill="#f58a28" opacity="0.85"/>
<circle cx="550.38" cy="162.88" r="0.62" fill="#e8481c" opacity="0.85"/>
<circle cx="548.05" cy="164.34" r="0.65" fill="#f0701c" opacity="0.85"/>
<circle cx="546.06" cy="162.94" r="0.91" fill="#f0701c" opacity="0.85"/>
<circle cx="545.58" cy="160.36" r="0.63" fill="#f07a24" opacity="0.85"/>
<circle cx="556.4" cy="185.23" r="0.99" fill="#f0701c" opacity="0.85"/>
<circle cx="549.74" cy="169.58" r="0.8" fill="#ee5a1e" opacity="0.85"/>
<circle cx="563.48" cy="161.57" r="0.97" fill="#f07a24" opacity="0.85"/>
<circle cx="550.61" cy="194.93" r="0.53" fill="#ee5a1e" opacity="0.85"/>
<circle cx="557.88" cy="161.57" r="0.46" fill="#f0701c" opacity="0.85"/>
<circle cx="525.16" cy="167.34" r="0.71" fill="#f0701c" opacity="0.85"/>
<circle cx="546.31" cy="156.56" r="0.61" fill="#e8481c" opacity="0.85"/>
<circle cx="563.26" cy="152.01" r="0.62" fill="#f0701c" opacity="0.85"/>
<circle cx="546.84" cy="172.65" r="0.63" fill="#f07a24" opacity="0.85"/>
<circle cx="543.45" cy="164.91" r="0.92" fill="#ee5a1e" opacity="0.85"/>
<circle cx="556.28" cy="162.75" r="0.74" fill="#f07a24" opacity="0.85"/>
<circle cx="547.09" cy="155.8" r="0.56" fill="#ee5a1e" opacity="0.85"/>
<circle cx="558.46" cy="154.91" r="0.71" fill="#f58a28" opacity="0.85"/>
<circle cx="556.55" cy="176.76" r="0.85" fill="#f07a24" opacity="0.85"/>
<circle cx="552.94" cy="176.19" r="0.77" fill="#ee5a1e" opacity="0.85"/>
<circle cx="545.1" cy="164.52" r="0.84" fill="#f07a24" opacity="0.85"/>
<circle cx="554.88" cy="171.01" r="0.51" fill="#f58a28" opacity="0.85"/>
<circle cx="545.53" cy="158.03" r="0.5" fill="#ee5a1e" opacity="0.85"/>
<circle cx="550.81" cy="196.08" r="1" fill="#ee5a1e" opacity="0.85"/>
<circle cx="555.94" cy="163.64" r="0.6" fill="#ee5a1e" opacity="0.85"/>
<circle cx="555.96" cy="145.48" r="0.63" fill="#ee5a1e" opacity="0.85"/>
<circle cx="566.9" cy="182.45" r="0.53" fill="#e8481c" opacity="0.85"/>
<circle cx="550.64" cy="165.45" r="0.91" fill="#e8481c" opacity="0.85"/>
<circle cx="548.41" cy="151.19" r="0.76" fill="#e8481c" opacity="0.85"/>
<circle cx="558.68" cy="166.34" r="0.83" fill="#f0701c" opacity="0.85"/>
<circle cx="550.91" cy="137.74" r="0.63" fill="#f07a24" opacity="0.85"/>
<circle cx="541.23" cy="155.58" r="0.9" fill="#f07a24" opacity="0.85"/>
<circle cx="522.45" cy="203.41" r="0.56" fill="#e8481c" opacity="0.5"/>
<circle cx="500.28" cy="224.39" r="0.58" fill="#e8481c" opacity="0.5"/>
<circle cx="510.66" cy="233.89" r="0.59" fill="#ee5a1e" opacity="0.5"/>
<circle cx="509.99" cy="234.43" r="0.48" fill="#f07a24" opacity="0.5"/>
<circle cx="520.47" cy="207.1" r="0.56" fill="#ee5a1e" opacity="0.5"/>
<circle cx="519.66" cy="212.45" r="0.3" fill="#e8481c" opacity="0.5"/>
<circle cx="515.47" cy="216.44" r="0.4" fill="#ee5a1e" opacity="0.5"/>
<circle cx="522.75" cy="240.32" r="0.68" fill="#f07a24" opacity="0.5"/>
<circle cx="494.58" cy="241.74" r="0.48" fill="#ee5a1e" opacity="0.5"/>
<circle cx="506.64" cy="203.87" r="0.56" fill="#f58a28" opacity="0.5"/>
<circle cx="496" cy="218.08" r="0.68" fill="#ee5a1e" opacity="0.5"/>
<circle cx="518.75" cy="219.47" r="0.51" fill="#f0701c" opacity="0.5"/>
<circle cx="507.52" cy="201.19" r="0.56" fill="#f58a28" opacity="0.5"/>
<circle cx="507.88" cy="233.73" r="0.31" fill="#e8481c" opacity="0.5"/>
<circle cx="526.68" cy="210.19" r="0.57" fill="#f07a24" opacity="0.5"/>
<circle cx="509.07" cy="229.76" r="0.6" fill="#f07a24" opacity="0.5"/>
<circle cx="553.44" cy="212.14" r="0.68" fill="#e8481c" opacity="0.5"/>
<circle cx="511.71" cy="227.03" r="0.61" fill="#ee5a1e" opacity="0.5"/>
<circle cx="492.66" cy="223.4" r="0.39" fill="#ee5a1e" opacity="0.5"/>
<circle cx="498.16" cy="235.65" r="0.63" fill="#e8481c" opacity="0.5"/>
<circle cx="268.75" cy="302.08" r="0.73" fill="#ee5a1e" opacity="0.8"/>
<circle cx="282.89" cy="286.17" r="0.87" fill="#ee5a1e" opacity="0.8"/>
<circle cx="278.54" cy="312.07" r="0.55" fill="#e8481c" opacity="0.8"/>
<circle cx="273.18" cy="287.08" r="0.88" fill="#f58a28" opacity="0.8"/>
<circle cx="267.42" cy="314.19" r="0.59" fill="#e8481c" opacity="0.8"/>
<circle cx="262.36" cy="307.73" r="0.8" fill="#f58a28" opacity="0.8"/>
<circle cx="286.7" cy="308.7" r="0.63" fill="#f0701c" opacity="0.8"/>
<circle cx="294.05" cy="276.02" r="0.87" fill="#ee5a1e" opacity="0.8"/>
<circle cx="267.58" cy="297.8" r="0.75" fill="#f0701c" opacity="0.8"/>
<circle cx="281.33" cy="304.68" r="0.58" fill="#f07a24" opacity="0.8"/>
<circle cx="286.13" cy="304.13" r="0.54" fill="#e8481c" opacity="0.8"/>
<circle cx="275.49" cy="305.91" r="0.94" fill="#f07a24" opacity="0.8"/>
</g>
<g id="photo-person" filter="url(#soft)">
<path d="M390.6 306 L408.6 307 L408 340 L407.6 374 L389.8 374 L390 340 Z" fill="url(#armL)"/>
<path d="M504 306 L519.6 305.4 L519 340 L518.4 372 L503 372 L503.8 340 Z" fill="url(#armR)"/>
<path d="M432.6 312.6 L471.4 312.6 L476 350 L478.4 385 L479.8 420 L420.4 420 L423.4 385 L428 350 Z" fill="url(#trouser)"/>
<path d="M432.6 312.6 H471.4 L472.4 323 H431.4 Z" fill="#dcdfec" opacity="0.9"/>
<path d="M431.6 323.2 H472.4" stroke="#7a80a0" stroke-width="0.8" opacity="0.8"/>
<path d="M453 380 L455.4 378 L457.4 390 L458.2 420 L451 420 L452 395 Z" fill="#120e22"/>
<g fill="none" stroke-linecap="round"><path d="M436 327 Q431 370 425 418" stroke="#767c9e" stroke-width="3.4" opacity="0.8"/><path d="M443.6 330 Q441 380 436 419" stroke="#ffffff" stroke-width="4.6" opacity="0.75"/><path d="M451 326 Q451.4 352 453 378" stroke="#8a90ae" stroke-width="2.2" opacity="0.8"/><path d="M459 330 Q462 360 463 385" stroke="#9aa0bc" stroke-width="3" opacity="0.7"/><path d="M465.6 345 Q468 385 468.6 419" stroke="#ffffff" stroke-width="4.2" opacity="0.7"/><path d="M472.6 336 Q475 380 477 418" stroke="#6c7296" stroke-width="2.6" opacity="0.8"/><path d="M437 334 q5 3.4 11 0.6" stroke="#6c7294" stroke-width="1.6" opacity="0.8"/><path d="M446 350 q-3 20 -2 40" stroke="#8288a8" stroke-width="1.6" opacity="0.6"/></g>
<path d="M436.4 193 L450 203 L466 192.4 L466.6 215 L464.6 250 L467 290 L470 313 L445.6 313 L445 290 L438.6 250 L436.6 215 Z" fill="url(#shirt)"/>
<g fill="none" stroke-linecap="round"><path d="M443.6 216 Q447 250 449 300" stroke="#ffffff" stroke-width="3.2" opacity="0.8"/><path d="M455.6 214 Q459 250 457.6 304" stroke="#8188a8" stroke-width="2.8" opacity="0.75"/><path d="M451.6 216 Q453.6 260 453 308" stroke="#5c6486" stroke-width="0.9" opacity="0.7"/><path d="M462 220 Q463 250 463.6 286" stroke="#f4f4fa" stroke-width="1.6" opacity="0.7"/><path d="M440.4 222 Q443 240 443.6 262" stroke="#7a82a4" stroke-width="1.5" opacity="0.7"/><path d="M448 288 q4 6 10 2" stroke="#6a7092" stroke-width="1.8" opacity="0.7"/></g>
<ellipse cx="452.6" cy="228" rx="1.2" ry="1" fill="#6a7090" opacity="0.7"/>
<ellipse cx="452.6" cy="244" rx="1.2" ry="1" fill="#6a7090" opacity="0.7"/>
<ellipse cx="452.6" cy="260" rx="1.2" ry="1" fill="#6a7090" opacity="0.7"/>
<ellipse cx="452.6" cy="276" rx="1.2" ry="1" fill="#6a7090" opacity="0.7"/>
<ellipse cx="452.6" cy="292" rx="1.2" ry="1" fill="#6a7090" opacity="0.7"/>
<path d="M440 205 L450 208.6 L460.6 204.6 L461.4 213.4 L450 211 L440.6 214.6 Z" fill="#7886ac"/>
<path d="M444 207 L450 209.4 L456.6 206.6" stroke="#c8d0e4" stroke-width="1" fill="none"/>
<path d="M436.6 193.6 L450 203.4 L465.8 193" fill="none" stroke="#f2f2f8" stroke-width="2.2"/>
<path d="M426.4 160 L473.8 160 C474.6 172 474 184 471.6 191.4 L463.6 190 L450 196 L437.6 190.6 L429.6 191.6 C426.4 184 425.6 172 426.4 160 Z" fill="#0d0c0e"/>
<path d="M438 178 L464.4 178 L465.4 193.6 L450 202.6 L437 194.6 Z" fill="url(#neck)"/>
<path d="M440 186 q10 7 22 0 l0.6 4 q-11 8 -23 0 z" fill="#8a5030" opacity="0.5"/>
<path d="M431 149 L468.7 149 L468.9 166 C468.7 174 466.2 179.8 461 183.2 L455 186.2 L450.4 187 L445.6 186.2 L439 183.2 C434.4 179.8 431.6 174 431.2 166 Z" fill="url(#face)"/>
<path d="M431.6 152 q-0.4 14 3 23 q2.6 5 7 8 q-4.6 -8 -6.4 -17 q-1 -8 -0.6 -14 z" fill="#a45c3c" opacity="0.5"/>
<path d="M468.4 154 q0.4 12 -2.6 21 q-2.6 5 -7 8 q4.6 -8 6.2 -17 q1 -7 0.4 -12 z" fill="#b06a48" opacity="0.45"/>
<g fill="none" stroke-linecap="round"><path d="M435.4 154.2 q4 -1.3 8 0.2" stroke="#3a2018" stroke-width="0.7" opacity="0.7"/><path d="M455.6 154.4 q4 -1.5 8 -0.2" stroke="#3a2018" stroke-width="0.7" opacity="0.7"/><path d="M436.4 156.2 q3.2 -1.5 6.6 0 q-3.2 1.3 -6.6 0 z" fill="#1c0e0a" stroke="#1c0e0a" stroke-width="0.5"/><path d="M456.4 156.3 q3.2 -1.6 6.6 -0.1 q-3.2 1.4 -6.6 0.1 z" fill="#1c0e0a" stroke="#1c0e0a" stroke-width="0.5"/><path d="M436.6 158 q3 1 6 0" stroke="#c08a6c" stroke-width="0.7" opacity="0.7"/><path d="M456.8 158 q3 1 6 0" stroke="#c08a6c" stroke-width="0.7" opacity="0.7"/><path d="M446.4 168.4 q3.4 1.8 6.8 0" stroke="#8a4830" stroke-width="1.3" opacity="0.85"/><path d="M448.6 158 q-1 5 -1.6 9" stroke="#c08868" stroke-width="1" opacity="0.6"/><path d="M442.2 174.2 q3.8 -2.2 7.6 -1 q3.8 -1.2 7.6 1 q-3.4 3.6 -7.6 3.6 q-4.2 0 -7.6 -3.6 z" fill="#b4463c" stroke="none"/><path d="M442.6 174.3 q7.2 1 14.4 0" stroke="#6a201c" stroke-width="0.6"/><path d="M446 176.4 q3.8 0.9 7.6 0" stroke="#d87468" stroke-width="0.9" opacity="0.8"/><path d="M445 181 q5 2 10 0" stroke="#b87858" stroke-width="1" opacity="0.5"/></g>
<ellipse cx="462.4" cy="160.4" rx="2.2" ry="3" fill="#c4c8dc" opacity="0.6"/>
<ellipse cx="449.6" cy="162.4" rx="2.2" ry="4.6" fill="#fde6d4" opacity="0.6"/><ellipse cx="440" cy="166" rx="3.4" ry="4" fill="#fad4bc" opacity="0.4"/><ellipse cx="459.6" cy="166" rx="3.4" ry="4" fill="#fad4bc" opacity="0.4"/>
<path d="M429.6 191.6 C425.6 187 423.9 178 423.5 170 L423 155 C423 133 429.6 121.3 450 121 C470.4 121.2 476.9 133 477 156 L477.3 172 C477.3 180 476.2 187 471.4 191.4 L466.4 189.6 C468.2 182 468.9 172 468.9 160 L468.7 152 C456 149.6 444 149.6 431.2 152 L431 160 C431.2 172 433 182 436.4 190.6 Z" fill="#0c0c0e"/>
<path d="M431.4 152.6 C444 150.4 456 150.4 468.6 152.6 L468.6 149 C456 147.4 444 147.4 431.4 149 Z" fill="#0a5c30"/>
<path d="M429.4 151 Q428.4 160 430 169" stroke="#0c7038" stroke-width="2" fill="none" opacity="0.9"/>
<path d="M470.4 151 Q471.4 160 469.8 168" stroke="#0c7038" stroke-width="1.8" fill="none" opacity="0.9"/>
<g fill="none" stroke="#2c2c36" stroke-linecap="round" opacity="0.6"><path d="M434 131 Q446 125.6 460 128.6" stroke-width="2"/><path d="M430 143 Q448 136 470 141.6" stroke-width="1.6"/><path d="M427 160 q-0.6 12 2 24" stroke-width="0.9"/><path d="M473.6 160 q0.6 12 -1.6 24" stroke-width="0.9"/></g>
<path d="M435.8 190.6 L421 199.6 L403 206.6 Q393.6 210 392 221 L388.6 260 L386 300 L386.2 309 L409 311 L408 336 L406.8 380 L405.4 420 L422.6 420 L425.6 386 L429.6 348 L433.6 318 L446 313 L445.4 290 L439 250 L437 215 Z" fill="url(#jacketL)"/>
<path d="M466.2 190.4 L482 199 L503 206.6 Q512.4 210.4 514.2 223 L519.4 262 L522.6 300 L522.6 307.6 L503.4 309.6 L504.4 340 L505.6 380 L506.8 420 L479.4 420 L478 385 L475.6 350 L471.4 313 L469.6 313 L466.6 290 L464.4 250 L466.4 215 Z" fill="url(#jacketR)"/>
<path d="M439 250 L445.4 290 L446 313 L433.6 318 L432 300 L432 270 Z" fill="#0a0428" opacity="0.8"/>
<path d="M464.4 250 L466.6 290 L469.6 313 L473.6 313 L471.6 280 L468.6 250 Z" fill="#0a0428" opacity="0.75"/>
<path d="M479 330 L500 325 L504.8 360 L506.8 420 L479.4 420 L478 385 Z" fill="#120648" opacity="0.5"/>
<path d="M435.8 190.6 L421 199.6 L403 206.6 Q396 209.2 393.6 214.6 Q406 209 418 208.4 L412 217.6 L431.4 211.6 L437.4 217 L437 200 Z" fill="#6a46b0" opacity="0.9"/>
<path d="M412 216.6 L431.4 210.6 L436 215 L426 222 L414 220 Z" fill="#1a0858" opacity="0.7"/>
<path d="M466.2 190.4 L482 199 L503 206.6 Q510 209.4 512.6 215 Q500 209.6 488 208.6 L496 219 L474.6 212 L466 219 L466.4 200 Z" fill="#8058bc" opacity="0.92"/>
<path d="M496 218 L474.6 211 L468 216 L478 223 L492 221.6 Z" fill="#1a0858" opacity="0.7"/>
<g fill="none" stroke-linecap="round">
<path d="M395.6 216 Q392.6 242 391 270" stroke="#7c66d0" stroke-width="1.36" opacity="0.6"/>
<path d="M401 224 Q400 252 402 284" stroke="#16084c" stroke-width="2.4" opacity="0.7"/>
<path d="M399.6 238 Q403 252 407 262" stroke="#d8d0f8" stroke-width="0.94" opacity="0.6"/>
<path d="M411 222 Q414 262 412 300" stroke="#8a76dc" stroke-width="1.1" opacity="0.52"/>
<path d="M408.6 236 Q414 250 419.6 262" stroke="#e4e0ff" stroke-width="1.02" opacity="0.56"/>
<path d="M420 222 Q424 256 427 300" stroke="#180850" stroke-width="2.8" opacity="0.7"/>
<path d="M429.6 218 Q433.6 246 435 268" stroke="#7e6ad0" stroke-width="1.1" opacity="0.52"/>
<path d="M435.6 236 Q436.4 246 437 256" stroke="#e8e4ff" stroke-width="1.02" opacity="0.6"/>
<path d="M414.6 318 Q412 360 411 410" stroke="#8c7ce0" stroke-width="1.7" opacity="0.52"/>
<path d="M422 326 Q419 370 417 415" stroke="#16084c" stroke-width="2.4" opacity="0.7"/>
<path d="M410.6 332 Q408.6 350 409 372" stroke="#d8d4ff" stroke-width="1.1" opacity="0.56"/>
<path d="M412 374 Q416 386 411 396" stroke="#f0eeff" stroke-width="1.36" opacity="0.6"/>
<path d="M427 330 Q424 360 421 390" stroke="#7468c8" stroke-width="1.1" opacity="0.45"/>
<path d="M473 218 Q477 260 476 306" stroke="#5a44b8" stroke-width="1.6" opacity="0.7"/>
<path d="M484 222 Q490 270 489 330" stroke="#14064a" stroke-width="3.2" opacity="0.7"/>
<path d="M496.6 216 Q503 250 506.4 290" stroke="#7a66cc" stroke-width="1.27" opacity="0.52"/>
<path d="M499 236 Q502.6 250 503.6 262" stroke="#d0c8f4" stroke-width="0.94" opacity="0.56"/>
<path d="M509.6 226 Q514 260 517.4 296" stroke="#6e5cc4" stroke-width="1.19" opacity="0.52"/>
<path d="M481.6 326 Q487.6 344 491.6 360" stroke="#c4b8f0" stroke-width="1.1" opacity="0.56"/>
<path d="M494 332 Q498 380 499.6 416" stroke="#1c0c58" stroke-width="2.6" opacity="0.5"/>
<path d="M387.6 301 H408" stroke="#6a5abc" stroke-width="1.02" opacity="0.6"/>
<path d="M504 300.6 H522" stroke="#6a5abc" stroke-width="1.02" opacity="0.6"/>
<path d="M520.6 286 l0.6 12" stroke="#d8d4f4" stroke-width="0.85" opacity="0.6"/>
</g>
<path d="M409 311 L433.6 318 L429.6 348 L425.6 386 L422.6 420 L405.4 420 L406.8 380 L408 336 Z" fill="#2e1c9a" opacity="0.5"/>
<g fill="none" stroke-linecap="round" stroke-linejoin="round"><path d="M408.6 322 Q407.8 350 408.8 384" stroke="#b8a8ec" stroke-width="1.8" opacity="0.75"/><path d="M411.4 330 Q413.6 350 412.2 372" stroke="#ece8ff" stroke-width="1.2" opacity="0.8"/><path d="M416 336 Q419.4 352 417.2 376" stroke="#d0c4f8" stroke-width="1" opacity="0.7"/><path d="M421.6 330 Q424.4 350 421 380" stroke="#a898e0" stroke-width="1.2" opacity="0.6"/><path d="M426.6 326 Q427 340 425 356" stroke="#c8bcf4" stroke-width="1" opacity="0.6"/><path d="M410.4 387 Q415.6 383.4 419.6 390 Q417.6 397.4 411.4 396.4 Z" stroke="#f0ecff" stroke-width="1.1" opacity="0.8" fill="#8878d0" fill-opacity="0.35"/><path d="M412 408.6 l7 1.4 M410.6 415 l5.4 1" stroke="#f4f0ff" stroke-width="1.3" opacity="0.85"/><path d="M409.4 400 q3 3 8 2" stroke="#c8bcf4" stroke-width="0.9" opacity="0.7"/></g>
<path d="M390.2 371 L407.8 371 C409.5 380 409.7 388 408.7 396 C407.7 404 406 410 403.6 414 C401 416.2 398 415.2 396 412.6 C392.6 408 389.4 402 388 395 C387 388 388 380 390.2 371 Z" fill="url(#handL)"/>
<path d="M393.6 400 l2.2 10 M397.8 402 l2 11 M402.4 401 l1 10" stroke="#6e3418" stroke-width="0.8" fill="none" opacity="0.65" stroke-linecap="round"/>
<ellipse cx="401.6" cy="403.4" rx="1.6" ry="1.2" fill="#e8dcd8" opacity="0.8"/>
<path d="M502.8 369 L518.5 369 C519.5 378 519.3 388 517.5 396 C515.7 404 511 410 505 413 C501 414.6 497 413.6 495.6 410 C494.4 405 495.6 398 497.4 391 C499 384 501 377 502.8 369 Z" fill="url(#handR)"/>
<path d="M500.4 398 l-1.6 11 M505 400 l-2 11 M509.4 399 l-2 9" stroke="#6e3418" stroke-width="0.8" fill="none" opacity="0.6" stroke-linecap="round"/>
<ellipse cx="497.2" cy="401.4" rx="1.3" ry="1.7" fill="#e8dcd8" opacity="0.75"/>
</g>
</g>
<g id="viewer-status">
<rect x="238.6" y="420" width="441.4" height="9" fill="#161616"/>
<rect x="238.6" y="426.6" width="441.4" height="2.2" fill="#222223"/>
<rect x="243" y="423" width="3" height="0.9" rx="0.3" fill="#6b6b6b"/>
<rect x="251.1" y="423" width="3" height="0.9" rx="0.3" fill="#6b6b6b"/>
<rect x="259.5" y="423" width="3" height="0.9" rx="0.3" fill="#6b6b6b"/>
<rect x="268" y="423" width="3" height="0.9" rx="0.3" fill="#6b6b6b"/>
<text transform="matrix(1 0.0006 0.0006 1 405.2 425.53)" font-size="3.9" fill="#c6c6c6" textLength="108.8" lengthAdjust="spacingAndGlyphs" stroke="#c6c6c6" stroke-width="0.1">NOTHIGHESTRES_11.7.25_Hockney_Selects_Final.004.jpeg</text>
<rect x="636.4" y="421.2" width="4.6" height="4.6" rx="0.8" fill="none" stroke="#8a8a8a" stroke-width="0.6"/>
<circle cx="645.5" cy="423.6" r="0.8" fill="#6a6a6a"/>
<circle cx="651" cy="423.6" r="0.8" fill="#6a6a6a"/>
<circle cx="656.5" cy="423.6" r="0.8" fill="#6a6a6a"/>
<circle cx="662" cy="423.6" r="0.8" fill="#6a6a6a"/>
<circle cx="667.5" cy="423.6" r="0.8" fill="#6a6a6a"/>
<rect x="672.3" y="421.6" width="3.8" height="3.8" rx="0.4" fill="#8f8f8f"/>
</g>
</g>
</g>
<g id="laptop-base">
<path d="M92.5 470 H130 L128 475.2 H94.5 Z" fill="#080808"/>
<path d="M668.8 470 H707.5 L705.5 475.2 H670.8 Z" fill="#080808"/>
<path d="M58.8 448.2 H741.2 V464 Q741.2 471.4 732 471.4 H68 Q58.8 471.4 58.8 464 Z" fill="url(#baseGrad)"/>
<path d="M58.8 448.2 H741.2 V464 Q741.2 471.4 732 471.4 H68 Q58.8 471.4 58.8 464 Z" fill="url(#baseEnds)"/>
<rect x="58.8" y="448.2" width="682.4" height="1.1" fill="url(#baseTopLine)"/>
<path d="M59.4 449 H70 V468 Q61 468 59.4 461 Z" fill="url(#sideL)"/>
<path d="M740.6 449 H730 V468 Q739 468 740.6 461 Z" fill="url(#sideR)"/>
<path d="M347.6 448.2 H452.4 Q450.6 448.6 450 451 L449.4 454 Q448.8 456.6 446 456.6 H354 Q351.2 456.6 350.6 454 L350 451 Q349.4 448.6 347.6 448.2 Z" fill="url(#notchGrad)"/>
<path d="M347.6 448.2 Q349.4 448.6 350 451 L350.6 454 Q351.2 456.6 354 456.6" fill="none" stroke="#060606" stroke-width="0.9"/>
<path d="M452.4 448.2 Q450.6 448.6 450 451 L449.4 454 Q448.8 456.6 446 456.6" fill="none" stroke="#060606" stroke-width="0.9"/>
</g>
</svg>
</div>
</body>
</html>
